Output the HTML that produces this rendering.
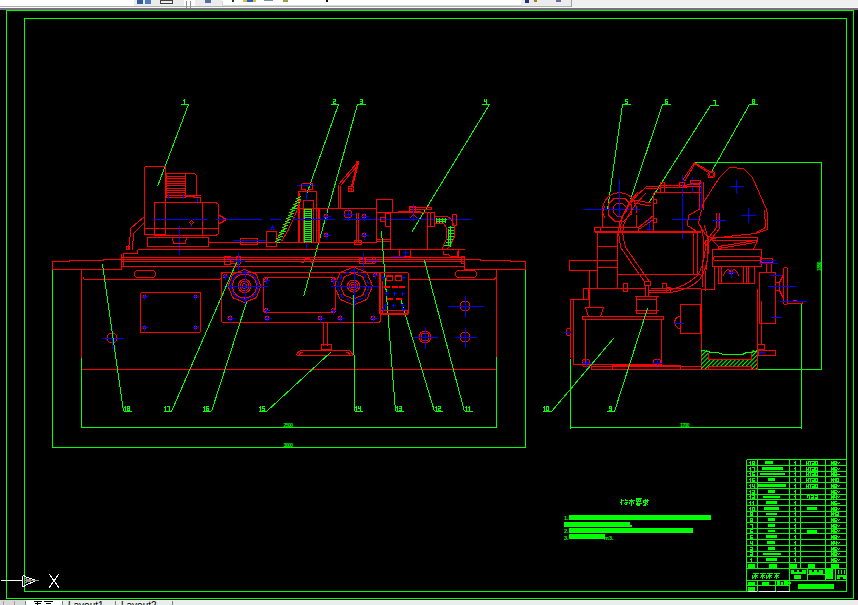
<!DOCTYPE html>
<html><head><meta charset="utf-8"><style>
html,body{margin:0;padding:0;background:#000;width:858px;height:605px;overflow:hidden}
svg{position:absolute;left:0;top:0}
text{font-family:"Liberation Sans",sans-serif}
</style></head><body>
<svg width="858" height="605" viewBox="0 0 858 605" shape-rendering="crispEdges" stroke-width="1">
<rect x="0" y="0" width="858" height="605" fill="#000"/>
<rect x="0" y="0" width="858" height="6" fill="#ffffff" stroke="none"/>
<rect x="134" y="0" width="50" height="6" fill="#ececec" stroke="none"/>
<rect x="195" y="0" width="27" height="6" fill="#ececec" stroke="none"/>
<rect x="521" y="0" width="51" height="6" fill="#ececec" stroke="none"/>
<rect x="572" y="0" width="286" height="7" fill="#f0f0f0" stroke="none"/>
<rect x="0" y="6" width="572" height="1" fill="#b0b0b0" stroke="none"/>
<rect x="571" y="0" width="1" height="7" fill="#a0a0a0" stroke="none"/>
<rect x="0" y="7" width="858" height="1" fill="#f8f8f8" stroke="none"/>
<rect x="0" y="8" width="858" height="2" fill="#766e7c" stroke="none"/>
<rect x="6.5" y="10.5" width="847" height="588" stroke="#00ff00" fill="none"/>
<rect x="24.5" y="18.5" width="822" height="573" stroke="#00ff00" fill="none"/>
<rect x="0" y="600" width="858" height="5" fill="#e6e6e6" stroke="none"/>
<line x1="180.5" y1="104.5" x2="188.5" y2="104.5" stroke="#00ff00"/>
<path d="M184,99h1v1h-1zM183,100h1v1h-1zM184,100h1v1h-1zM184,101h1v1h-1zM184,102h1v1h-1zM184,103h1v1h-1z" fill="#00ff00" stroke="none"/>
<line x1="188.5" y1="104.5" x2="157.5" y2="186.5" stroke="#00ff00"/>
<line x1="330.5" y1="104.5" x2="338.5" y2="104.5" stroke="#00ff00"/>
<path d="M333,99h1v1h-1zM334,99h1v1h-1zM335,99h1v1h-1zM335,100h1v1h-1zM333,101h1v1h-1zM334,101h1v1h-1zM335,101h1v1h-1zM333,102h1v1h-1zM333,103h1v1h-1zM334,103h1v1h-1zM335,103h1v1h-1z" fill="#00ff00" stroke="none"/>
<line x1="338.5" y1="104.5" x2="306.5" y2="194.5" stroke="#00ff00"/>
<line x1="357.5" y1="104.5" x2="365.5" y2="104.5" stroke="#00ff00"/>
<path d="M360,99h1v1h-1zM361,99h1v1h-1zM362,99h1v1h-1zM362,100h1v1h-1zM360,101h1v1h-1zM361,101h1v1h-1zM362,101h1v1h-1zM362,102h1v1h-1zM360,103h1v1h-1zM361,103h1v1h-1zM362,103h1v1h-1z" fill="#00ff00" stroke="none"/>
<line x1="357.5" y1="104.5" x2="303.5" y2="296.5" stroke="#00ff00"/>
<line x1="481.5" y1="104.5" x2="489.5" y2="104.5" stroke="#00ff00"/>
<path d="M484,99h1v1h-1zM486,99h1v1h-1zM484,100h1v1h-1zM486,100h1v1h-1zM484,101h1v1h-1zM485,101h1v1h-1zM486,101h1v1h-1zM486,102h1v1h-1zM486,103h1v1h-1z" fill="#00ff00" stroke="none"/>
<line x1="489.5" y1="104.5" x2="411.5" y2="232.5" stroke="#00ff00"/>
<rect x="144.5" y="166.5" width="21" height="68" stroke="#ff0000" fill="none" rx="1.5"/>
<rect x="166.5" y="173.5" width="19" height="24" stroke="#ff0000" fill="none"/>
<path d="M185.5,173.5 H193 Q196.5,173.5 196.5,177 V193 Q196.5,196.5 193,196.5 H185.5" stroke="#ff0000" fill="none"/>
<line x1="166.5" y1="176.5" x2="185.5" y2="176.5" stroke="#ff0000"/>
<line x1="166.5" y1="178.5" x2="185.5" y2="178.5" stroke="#ff0000"/>
<line x1="166.5" y1="181.5" x2="185.5" y2="181.5" stroke="#ff0000"/>
<line x1="166.5" y1="183.5" x2="185.5" y2="183.5" stroke="#ff0000"/>
<line x1="166.5" y1="185.5" x2="185.5" y2="185.5" stroke="#ff0000"/>
<line x1="166.5" y1="188.5" x2="185.5" y2="188.5" stroke="#ff0000"/>
<line x1="166.5" y1="190.5" x2="185.5" y2="190.5" stroke="#ff0000"/>
<line x1="166.5" y1="192.5" x2="185.5" y2="192.5" stroke="#ff0000"/>
<line x1="166.5" y1="195.5" x2="200.5" y2="195.5" stroke="#ff0000"/>
<polyline points="192.5,197.5 200.5,197.5 200.5,202.5" stroke="#ff0000" fill="none"/>
<line x1="168.5" y1="193.5" x2="168.5" y2="198.5" stroke="#0000ff"/>
<line x1="183.5" y1="193.5" x2="183.5" y2="198.5" stroke="#0000ff"/>
<line x1="197.5" y1="197.5" x2="197.5" y2="204.5" stroke="#0000ff"/>
<path d="M154.5,202.5 H214 Q218.5,202.5 218.5,206 V232 Q218.5,235.5 214,235.5 H154.5 Z" stroke="#ff0000" fill="none"/>
<line x1="165.5" y1="202.5" x2="165.5" y2="235.5" stroke="#ff0000"/>
<line x1="202.5" y1="202.5" x2="202.5" y2="235.5" stroke="#ff0000"/>
<line x1="144.5" y1="228.5" x2="218.5" y2="228.5" stroke="#ff0000"/>
<line x1="152.5" y1="219.5" x2="189.5" y2="219.5" stroke="#0000ff"/>
<line x1="191.5" y1="219.5" x2="207.5" y2="219.5" stroke="#0000ff"/>
<line x1="215.5" y1="219.5" x2="225.5" y2="219.5" stroke="#0000ff"/>
<polyline points="218.5,215.5 222.5,216.5 222.5,217.5 226.5,219.5 222.5,221.5 222.5,222.5 218.5,223.5" stroke="#ff0000" fill="none"/>
<circle cx="191.5" cy="222.5" r="1.8" stroke="#ff0000" fill="none"/>
<line x1="191.5" y1="224.5" x2="191.5" y2="226.5" stroke="#0000ff"/>
<line x1="179.5" y1="225.5" x2="179.5" y2="254.5" stroke="#0000ff"/>
<rect x="147.5" y="237.5" width="61" height="9" stroke="#ff0000" fill="none"/>
<polyline points="172.5,237.5 173.5,243.5 185.5,243.5 186.5,237.5" stroke="#ff0000" fill="none"/>
<path d="M144.5,216.5 L131,228 L128.5,250" stroke="#ff0000" fill="none"/>
<path d="M144.5,222.5 L134,233 L132,250" stroke="#ff0000" fill="none"/>
<circle cx="128" cy="248" r="2" stroke="#ff0000" fill="none"/>
<rect x="240.5" y="238.5" width="17" height="6" stroke="#ff0000" fill="none"/>
<line x1="232.5" y1="240.5" x2="266.5" y2="240.5" stroke="#0000ff"/>
<rect x="266.5" y="231.5" width="10" height="15" stroke="#ff0000" fill="none"/>
<polyline points="270.5,230.5 272.5,226.5 274.5,230.5" stroke="#0000ff" fill="none"/>
<line x1="208.5" y1="242.5" x2="376.5" y2="242.5" stroke="#ff0000"/>
<line x1="137.5" y1="249.5" x2="464.5" y2="249.5" stroke="#ff0000"/>
<polyline points="137.5,249.5 137.5,253.5 123.5,253.5 123.5,266.5" stroke="#ff0000" fill="none"/>
<line x1="121.5" y1="257.5" x2="464.5" y2="257.5" stroke="#ff0000"/>
<line x1="121.5" y1="259.5" x2="464.5" y2="259.5" stroke="#ff0000"/>
<line x1="121.5" y1="261.5" x2="464.5" y2="261.5" stroke="#ff0000"/>
<line x1="120.5" y1="266.5" x2="464.5" y2="266.5" stroke="#ff0000"/>
<line x1="121.5" y1="253.5" x2="121.5" y2="266.5" stroke="#ff0000"/>
<polyline points="52.5,269.5 52.5,261.5 69.5,261.5 69.5,260.5 103.5,260.5 103.5,259.5 121.5,259.5" stroke="#ff0000" fill="none"/>
<line x1="52.5" y1="269.5" x2="121.5" y2="269.5" stroke="#ff0000"/>
<line x1="121.5" y1="257.5" x2="121.5" y2="269.5" stroke="#ff0000"/>
<polyline points="464.5,257.5 464.5,269.5 525.5,269.5 525.5,261.5 510.5,261.5 510.5,260.5 480.5,260.5 480.5,259.5 464.5,259.5" stroke="#ff0000" fill="none"/>
<rect x="461.5" y="256.5" width="3" height="7" stroke="#ff0000" fill="none"/>
<line x1="458.5" y1="249.5" x2="458.5" y2="257.5" stroke="#ff0000"/>
<line x1="81.5" y1="269.5" x2="81.5" y2="357.5" stroke="#ff0000"/>
<path d="M83.5,277 Q83.5,279.5 86,279.5 H218 Q221.5,279.5 221.5,276 V272" stroke="#ff0000" fill="none"/>
<path d="M408.5,279.5 H492 Q496.5,279.5 496.5,275 V269" stroke="#ff0000" fill="none"/>
<line x1="496.5" y1="269.5" x2="496.5" y2="356.5" stroke="#ff0000"/>
<line x1="81.5" y1="369.5" x2="496.5" y2="369.5" stroke="#ff0000"/>
<rect x="134.5" y="270.5" width="21" height="7" stroke="#ff0000" fill="none" rx="3.5"/>
<rect x="455.5" y="270.5" width="21" height="7" stroke="#ff0000" fill="none" rx="3.5"/>
<rect x="140.5" y="292.5" width="60" height="40" stroke="#ff0000" fill="none" rx="1.5"/>
<circle cx="144.5" cy="296.5" r="1.5" stroke="#ff0000" fill="none"/>
<line x1="141.5" y1="296.5" x2="147.5" y2="296.5" stroke="#0000ff"/>
<line x1="144.5" y1="293.5" x2="144.5" y2="299.5" stroke="#0000ff"/>
<circle cx="195.5" cy="296.5" r="1.5" stroke="#ff0000" fill="none"/>
<line x1="192.5" y1="296.5" x2="198.5" y2="296.5" stroke="#0000ff"/>
<line x1="195.5" y1="293.5" x2="195.5" y2="299.5" stroke="#0000ff"/>
<circle cx="144.5" cy="327.5" r="1.5" stroke="#ff0000" fill="none"/>
<line x1="141.5" y1="327.5" x2="147.5" y2="327.5" stroke="#0000ff"/>
<line x1="144.5" y1="324.5" x2="144.5" y2="330.5" stroke="#0000ff"/>
<circle cx="195.5" cy="327.5" r="1.5" stroke="#ff0000" fill="none"/>
<line x1="192.5" y1="327.5" x2="198.5" y2="327.5" stroke="#0000ff"/>
<line x1="195.5" y1="324.5" x2="195.5" y2="330.5" stroke="#0000ff"/>
<circle cx="112" cy="338" r="5" stroke="#ff0000" fill="none"/>
<line x1="101.5" y1="338.5" x2="123.5" y2="338.5" stroke="#0000ff"/>
<line x1="112.5" y1="328.5" x2="112.5" y2="348.5" stroke="#0000ff"/>
<circle cx="465" cy="306" r="5" stroke="#ff0000" fill="none"/>
<line x1="447.5" y1="306.5" x2="483.5" y2="306.5" stroke="#0000ff"/>
<line x1="465.5" y1="295.5" x2="465.5" y2="317.5" stroke="#0000ff"/>
<circle cx="465" cy="337" r="5" stroke="#ff0000" fill="none"/>
<line x1="454.5" y1="337.5" x2="476.5" y2="337.5" stroke="#0000ff"/>
<line x1="465.5" y1="327.5" x2="465.5" y2="347.5" stroke="#0000ff"/>
<circle cx="425" cy="337" r="6" stroke="#ff0000" fill="none"/>
<circle cx="425" cy="337" r="4" stroke="#ff0000" fill="none"/>
<line x1="413.5" y1="337.5" x2="437.5" y2="337.5" stroke="#0000ff"/>
<line x1="425.5" y1="326.5" x2="425.5" y2="348.5" stroke="#0000ff"/>
<rect x="221.5" y="272.5" width="159" height="50" stroke="#ff0000" fill="none" rx="2.5"/>
<rect x="263.5" y="277.5" width="72" height="35" stroke="#ff0000" fill="none" rx="2"/>
<polygon points="261.0,286.0 256.2,297.7 244.5,302.5 232.8,297.7 228.0,286.0 232.8,274.3 244.5,269.5 256.2,274.3" stroke="#ff0000" fill="none" />
<polygon points="258.5,286.0 254.4,295.9 244.5,300.0 234.6,295.9 230.5,286.0 234.6,276.1 244.5,272.0 254.4,276.1" stroke="#0000ff" fill="none" />
<circle cx="244.5" cy="286" r="12" stroke="#ff0000" fill="none"/>
<circle cx="244.5" cy="286" r="6.5" stroke="#ff0000" fill="none"/>
<circle cx="244.5" cy="286" r="4.5" stroke="#ff0000" fill="none"/>
<circle cx="244.5" cy="286" r="2.5" stroke="#ff0000" fill="none"/>
<line x1="223.5" y1="286.5" x2="267.5" y2="286.5" stroke="#0000ff"/>
<line x1="245.5" y1="269.5" x2="245.5" y2="303.5" stroke="#0000ff"/>
<polygon points="372.5,286.0 366.9,299.4 353.5,305.0 340.1,299.4 334.5,286.0 340.1,272.6 353.5,267.0 366.9,272.6" stroke="#ff0000" fill="none" />
<polygon points="369.5,286.0 364.8,297.3 353.5,302.0 342.2,297.3 337.5,286.0 342.2,274.7 353.5,270.0 364.8,274.7" stroke="#0000ff" fill="none" stroke-dasharray="5 2"/>
<polygon points="366.5,286.0 362.7,295.2 353.5,299.0 344.3,295.2 340.5,286.0 344.3,276.8 353.5,273.0 362.7,276.8" stroke="#ff0000" fill="none" />
<circle cx="353.5" cy="286" r="6" stroke="#ff0000" fill="none"/>
<circle cx="353.5" cy="286" r="4" stroke="#ff0000" fill="none"/>
<circle cx="353.5" cy="286" r="2" stroke="#ff0000" fill="none"/>
<line x1="330.5" y1="286.5" x2="378.5" y2="286.5" stroke="#0000ff"/>
<line x1="354.5" y1="266.5" x2="354.5" y2="306.5" stroke="#0000ff"/>
<circle cx="230" cy="318" r="1.8" stroke="#ff0000" fill="none"/>
<line x1="226.5" y1="318.5" x2="234.5" y2="318.5" stroke="#0000ff"/>
<line x1="230.5" y1="314.5" x2="230.5" y2="322.5" stroke="#0000ff"/>
<circle cx="267" cy="318" r="1.8" stroke="#ff0000" fill="none"/>
<line x1="263.5" y1="318.5" x2="271.5" y2="318.5" stroke="#0000ff"/>
<line x1="267.5" y1="314.5" x2="267.5" y2="322.5" stroke="#0000ff"/>
<circle cx="320" cy="318" r="1.8" stroke="#ff0000" fill="none"/>
<line x1="316.5" y1="318.5" x2="324.5" y2="318.5" stroke="#0000ff"/>
<line x1="320.5" y1="314.5" x2="320.5" y2="322.5" stroke="#0000ff"/>
<circle cx="340" cy="318" r="1.8" stroke="#ff0000" fill="none"/>
<line x1="336.5" y1="318.5" x2="344.5" y2="318.5" stroke="#0000ff"/>
<line x1="340.5" y1="314.5" x2="340.5" y2="322.5" stroke="#0000ff"/>
<circle cx="373" cy="318" r="1.8" stroke="#ff0000" fill="none"/>
<line x1="369.5" y1="318.5" x2="377.5" y2="318.5" stroke="#0000ff"/>
<line x1="373.5" y1="314.5" x2="373.5" y2="322.5" stroke="#0000ff"/>
<circle cx="266" cy="280" r="1.5" stroke="#ff0000" fill="none"/>
<line x1="263.5" y1="280.5" x2="269.5" y2="280.5" stroke="#0000ff"/>
<line x1="266.5" y1="277.5" x2="266.5" y2="283.5" stroke="#0000ff"/>
<circle cx="333" cy="280" r="1.5" stroke="#ff0000" fill="none"/>
<line x1="330.5" y1="280.5" x2="336.5" y2="280.5" stroke="#0000ff"/>
<line x1="333.5" y1="277.5" x2="333.5" y2="283.5" stroke="#0000ff"/>
<circle cx="266" cy="310" r="1.5" stroke="#ff0000" fill="none"/>
<line x1="263.5" y1="310.5" x2="269.5" y2="310.5" stroke="#0000ff"/>
<line x1="266.5" y1="307.5" x2="266.5" y2="313.5" stroke="#0000ff"/>
<circle cx="333" cy="310" r="1.5" stroke="#ff0000" fill="none"/>
<line x1="330.5" y1="310.5" x2="336.5" y2="310.5" stroke="#0000ff"/>
<line x1="333.5" y1="307.5" x2="333.5" y2="313.5" stroke="#0000ff"/>
<circle cx="225" cy="276" r="1.5" stroke="#ff0000" fill="none"/>
<line x1="222.5" y1="276.5" x2="228.5" y2="276.5" stroke="#0000ff"/>
<line x1="225.5" y1="273.5" x2="225.5" y2="279.5" stroke="#0000ff"/>
<circle cx="375" cy="275" r="1.5" stroke="#ff0000" fill="none"/>
<line x1="372.5" y1="275.5" x2="378.5" y2="275.5" stroke="#0000ff"/>
<line x1="375.5" y1="272.5" x2="375.5" y2="278.5" stroke="#0000ff"/>
<line x1="323.5" y1="322.5" x2="323.5" y2="345.5" stroke="#ff0000"/>
<line x1="327.5" y1="322.5" x2="327.5" y2="345.5" stroke="#ff0000"/>
<rect x="321.5" y="344.5" width="10" height="5" stroke="#ff0000" fill="none"/>
<path d="M296.5,355.5 H352.5 Q352,351 348.5,350.5 H302 Q297.5,351 296.5,355.5" stroke="#ff0000" fill="none"/>
<path d="M299.5,355 Q300,352 303,352" stroke="#ff0000" fill="none"/>
<path d="M349.5,355 Q349,352 346,352" stroke="#ff0000" fill="none"/>
<polyline points="300.5,262.5 303.5,262.5 305.5,258.5 309.5,258.5 311.5,262.5 313.5,262.5" stroke="#ff0000" fill="none"/>
<rect x="224.5" y="256.5" width="6" height="8" stroke="#ff0000" fill="none"/>
<rect x="230.5" y="257.5" width="6" height="6" stroke="#ff0000" fill="none"/>
<path d="M236,256 H240 Q242,260 240,264 H236" stroke="#ff0000" fill="none"/>
<line x1="238.5" y1="252.5" x2="238.5" y2="269.5" stroke="#0000ff"/>
<line x1="226.5" y1="258.5" x2="233.5" y2="258.5" stroke="#0000ff"/>
<line x1="233.5" y1="261.5" x2="244.5" y2="261.5" stroke="#0000ff"/>
<rect x="359.5" y="258.5" width="6" height="5" stroke="#ff0000" fill="none"/>
<rect x="365.5" y="257.5" width="7" height="6" stroke="#ff0000" fill="none"/>
<path d="M372,257 H375 Q377,260 375,263 H372" stroke="#ff0000" fill="none"/>
<line x1="363.5" y1="252.5" x2="363.5" y2="269.5" stroke="#0000ff"/>
<line x1="366.5" y1="260.5" x2="378.5" y2="260.5" stroke="#0000ff"/>
<rect x="298.5" y="208.5" width="78" height="34" stroke="#ff0000" fill="none"/>
<rect x="298.5" y="191.5" width="18" height="51" stroke="#ff0000" fill="none"/>
<rect x="303.5" y="200.5" width="10" height="42" stroke="#ff0000" fill="none"/>
<line x1="296.5" y1="185.5" x2="315.5" y2="185.5" stroke="#0000ff"/>
<polyline points="301.5,183.5 312.5,183.5 312.5,189.5 309.5,189.5 309.5,191.5" stroke="#ff0000" fill="none"/>
<polyline points="301.5,183.5 301.5,189.5 305.5,189.5 305.5,191.5" stroke="#ff0000" fill="none"/>
<line x1="306.5" y1="191.5" x2="306.5" y2="200.5" stroke="#0000ff"/>
<line x1="306.5" y1="242.5" x2="306.5" y2="248.5" stroke="#0000ff"/>
<line x1="299.5" y1="192.5" x2="299.5" y2="242.5" stroke="#ff0000"/>
<line x1="304.5" y1="209.5" x2="311.5" y2="209.5" stroke="#00ff00"/>
<line x1="304.5" y1="211.5" x2="311.5" y2="211.5" stroke="#00ff00"/>
<line x1="304.5" y1="213.5" x2="311.5" y2="213.5" stroke="#00ff00"/>
<line x1="304.5" y1="215.5" x2="311.5" y2="215.5" stroke="#00ff00"/>
<line x1="304.5" y1="217.5" x2="311.5" y2="217.5" stroke="#00ff00"/>
<line x1="304.5" y1="219.5" x2="311.5" y2="219.5" stroke="#00ff00"/>
<line x1="304.5" y1="221.5" x2="311.5" y2="221.5" stroke="#00ff00"/>
<line x1="304.5" y1="223.5" x2="311.5" y2="223.5" stroke="#00ff00"/>
<line x1="304.5" y1="225.5" x2="311.5" y2="225.5" stroke="#00ff00"/>
<line x1="304.5" y1="227.5" x2="311.5" y2="227.5" stroke="#00ff00"/>
<line x1="304.5" y1="229.5" x2="311.5" y2="229.5" stroke="#00ff00"/>
<line x1="304.5" y1="231.5" x2="311.5" y2="231.5" stroke="#00ff00"/>
<line x1="304.5" y1="233.5" x2="311.5" y2="233.5" stroke="#00ff00"/>
<line x1="304.5" y1="235.5" x2="311.5" y2="235.5" stroke="#00ff00"/>
<line x1="304.5" y1="237.5" x2="311.5" y2="237.5" stroke="#00ff00"/>
<line x1="304.5" y1="239.5" x2="311.5" y2="239.5" stroke="#00ff00"/>
<line x1="304.5" y1="241.5" x2="311.5" y2="241.5" stroke="#00ff00"/>
<line x1="304.5" y1="208.5" x2="304.5" y2="242.5" stroke="#00ff00"/>
<line x1="311.5" y1="208.5" x2="311.5" y2="242.5" stroke="#00ff00"/>
<rect x="316.5" y="230.5" width="3" height="12" stroke="#ff0000" fill="none"/>
<line x1="316.5" y1="208.5" x2="316.5" y2="242.5" stroke="#ff0000"/>
<line x1="318.5" y1="208.5" x2="318.5" y2="242.5" stroke="#ff0000"/>
<line x1="319.5" y1="208.5" x2="319.5" y2="242.5" stroke="#ff0000"/>
<line x1="338.5" y1="184.5" x2="338.5" y2="208.5" stroke="#ff0000"/>
<line x1="340.5" y1="185.5" x2="340.5" y2="208.5" stroke="#ff0000"/>
<line x1="338.5" y1="184.5" x2="356.5" y2="163.5" stroke="#ff0000"/>
<line x1="340.5" y1="185.5" x2="357.5" y2="165.5" stroke="#ff0000"/>
<rect x="356" y="161" width="3" height="3" fill="#ff0000" stroke="none"/>
<line x1="357.5" y1="162.5" x2="351.5" y2="186.5" stroke="#ff0000"/>
<line x1="358.5" y1="163.5" x2="352.5" y2="186.5" stroke="#ff0000"/>
<circle cx="351" cy="189" r="3" stroke="#ff0000" fill="none"/>
<circle cx="350" cy="190" r="1.5" stroke="#ff0000" fill="none"/>
<circle cx="326" cy="216" r="2" stroke="#ff0000" fill="none"/>
<line x1="322.5" y1="216.5" x2="330.5" y2="216.5" stroke="#0000ff"/>
<line x1="326.5" y1="212.5" x2="326.5" y2="220.5" stroke="#0000ff"/>
<circle cx="326" cy="235" r="2" stroke="#ff0000" fill="none"/>
<line x1="322.5" y1="235.5" x2="330.5" y2="235.5" stroke="#0000ff"/>
<line x1="326.5" y1="231.5" x2="326.5" y2="239.5" stroke="#0000ff"/>
<circle cx="364" cy="216" r="2" stroke="#ff0000" fill="none"/>
<line x1="360.5" y1="216.5" x2="368.5" y2="216.5" stroke="#0000ff"/>
<line x1="364.5" y1="212.5" x2="364.5" y2="220.5" stroke="#0000ff"/>
<circle cx="364" cy="235" r="2" stroke="#ff0000" fill="none"/>
<line x1="360.5" y1="235.5" x2="368.5" y2="235.5" stroke="#0000ff"/>
<line x1="364.5" y1="231.5" x2="364.5" y2="239.5" stroke="#0000ff"/>
<circle cx="348" cy="214" r="4" stroke="#ff0000" fill="none"/>
<line x1="342.5" y1="214.5" x2="354.5" y2="214.5" stroke="#0000ff"/>
<line x1="348.5" y1="208.5" x2="348.5" y2="220.5" stroke="#0000ff"/>
<line x1="356.5" y1="212.5" x2="356.5" y2="242.5" stroke="#ff0000"/>
<line x1="358.5" y1="212.5" x2="358.5" y2="242.5" stroke="#ff0000"/>
<rect x="354.5" y="240.5" width="7" height="4" stroke="#ff0000" fill="none"/>
<polyline points="298.5,197.5 290.5,214.5 283.5,228.5 276.5,240.5" stroke="#ff0000" fill="none"/>
<polyline points="300.5,200.5 294.5,216.5 287.5,231.5 281.5,241.5" stroke="#ff0000" fill="none"/>
<line x1="296.5" y1="198.5" x2="301.5" y2="196.5" stroke="#00ff00"/>
<line x1="297.5" y1="199.5" x2="300.5" y2="199.5" stroke="#00ff00"/>
<line x1="295.5" y1="201.5" x2="300.5" y2="199.5" stroke="#00ff00"/>
<line x1="296.5" y1="202.5" x2="299.5" y2="202.5" stroke="#00ff00"/>
<line x1="293.5" y1="204.5" x2="298.5" y2="202.5" stroke="#00ff00"/>
<line x1="294.5" y1="205.5" x2="297.5" y2="205.5" stroke="#00ff00"/>
<line x1="292.5" y1="207.5" x2="297.5" y2="205.5" stroke="#00ff00"/>
<line x1="293.5" y1="208.5" x2="296.5" y2="208.5" stroke="#00ff00"/>
<line x1="290.5" y1="209.5" x2="295.5" y2="207.5" stroke="#00ff00"/>
<line x1="291.5" y1="210.5" x2="294.5" y2="210.5" stroke="#00ff00"/>
<line x1="289.5" y1="212.5" x2="294.5" y2="210.5" stroke="#00ff00"/>
<line x1="290.5" y1="213.5" x2="293.5" y2="213.5" stroke="#00ff00"/>
<line x1="288.5" y1="215.5" x2="293.5" y2="213.5" stroke="#00ff00"/>
<line x1="289.5" y1="216.5" x2="292.5" y2="216.5" stroke="#00ff00"/>
<line x1="286.5" y1="218.5" x2="291.5" y2="216.5" stroke="#00ff00"/>
<line x1="287.5" y1="219.5" x2="290.5" y2="219.5" stroke="#00ff00"/>
<line x1="285.5" y1="221.5" x2="290.5" y2="219.5" stroke="#00ff00"/>
<line x1="286.5" y1="222.5" x2="289.5" y2="222.5" stroke="#00ff00"/>
<line x1="283.5" y1="224.5" x2="288.5" y2="222.5" stroke="#00ff00"/>
<line x1="284.5" y1="225.5" x2="287.5" y2="225.5" stroke="#00ff00"/>
<line x1="282.5" y1="227.5" x2="287.5" y2="225.5" stroke="#00ff00"/>
<line x1="283.5" y1="228.5" x2="286.5" y2="228.5" stroke="#00ff00"/>
<line x1="281.5" y1="230.5" x2="286.5" y2="228.5" stroke="#00ff00"/>
<line x1="282.5" y1="231.5" x2="285.5" y2="231.5" stroke="#00ff00"/>
<line x1="279.5" y1="232.5" x2="284.5" y2="230.5" stroke="#00ff00"/>
<line x1="280.5" y1="233.5" x2="283.5" y2="233.5" stroke="#00ff00"/>
<line x1="278.5" y1="235.5" x2="283.5" y2="233.5" stroke="#00ff00"/>
<line x1="279.5" y1="236.5" x2="282.5" y2="236.5" stroke="#00ff00"/>
<line x1="276.5" y1="238.5" x2="281.5" y2="236.5" stroke="#00ff00"/>
<line x1="277.5" y1="239.5" x2="280.5" y2="239.5" stroke="#00ff00"/>
<line x1="275.5" y1="241.5" x2="280.5" y2="239.5" stroke="#00ff00"/>
<line x1="276.5" y1="242.5" x2="279.5" y2="242.5" stroke="#00ff00"/>
<line x1="225.5" y1="219.5" x2="261.5" y2="219.5" stroke="#0000ff"/>
<line x1="269.5" y1="219.5" x2="280.5" y2="219.5" stroke="#0000ff"/>
<line x1="292.5" y1="219.5" x2="334.5" y2="219.5" stroke="#0000ff"/>
<line x1="342.5" y1="219.5" x2="470.5" y2="219.5" stroke="#0000ff"/>
<rect x="376.5" y="199.5" width="16" height="13" stroke="#ff0000" fill="none"/>
<line x1="376.5" y1="212.5" x2="376.5" y2="242.5" stroke="#ff0000"/>
<line x1="376.5" y1="241.5" x2="390.5" y2="241.5" stroke="#ff0000"/>
<line x1="376.5" y1="239.5" x2="390.5" y2="239.5" stroke="#ff0000"/>
<line x1="385.5" y1="212.5" x2="427.5" y2="212.5" stroke="#ff0000"/>
<line x1="390.5" y1="212.5" x2="390.5" y2="249.5" stroke="#ff0000"/>
<line x1="427.5" y1="212.5" x2="427.5" y2="249.5" stroke="#ff0000"/>
<rect x="385.5" y="213.5" width="5" height="13" stroke="#ff0000" fill="none"/>
<rect x="380.5" y="217.5" width="5" height="4" stroke="#ff0000" fill="none"/>
<rect x="427.5" y="212.5" width="7" height="14" stroke="#ff0000" fill="none"/>
<line x1="430.5" y1="212.5" x2="430.5" y2="226.5" stroke="#ff0000"/>
<rect x="409.5" y="207.5" width="22" height="2" stroke="#ff0000" fill="none"/>
<line x1="397.5" y1="211.5" x2="420.5" y2="211.5" stroke="#ff0000"/>
<rect x="409.5" y="206.5" width="6" height="5" stroke="#ff0000" fill="none"/>
<line x1="413.5" y1="203.5" x2="413.5" y2="220.5" stroke="#0000ff"/>
<polyline points="409.5,218.5 413.5,214.5 417.5,218.5" stroke="#ff0000" fill="none"/>
<polyline points="434.5,216.5 447.5,216.5 451.5,219.5 454.5,226.5 454.5,236.5 450.5,244.5 446.5,250.5" stroke="#ff0000" fill="none"/>
<polyline points="434.5,223.5 443.5,223.5 446.5,227.5 446.5,238.5 443.5,245.5 441.5,250.5" stroke="#ff0000" fill="none"/>
<line x1="436.5" y1="217.5" x2="436.5" y2="222.5" stroke="#00ff00"/>
<line x1="439.5" y1="217.5" x2="439.5" y2="222.5" stroke="#00ff00"/>
<line x1="442.5" y1="217.5" x2="442.5" y2="222.5" stroke="#00ff00"/>
<line x1="445.5" y1="217.5" x2="445.5" y2="222.5" stroke="#00ff00"/>
<line x1="436.5" y1="219.5" x2="446.5" y2="219.5" stroke="#00ff00"/>
<line x1="436.5" y1="221.5" x2="444.5" y2="221.5" stroke="#00ff00"/>
<line x1="447.5" y1="227.5" x2="453.5" y2="227.5" stroke="#00ff00"/>
<line x1="447.5" y1="230.5" x2="453.5" y2="230.5" stroke="#00ff00"/>
<line x1="447.5" y1="233.5" x2="453.5" y2="233.5" stroke="#00ff00"/>
<line x1="447.5" y1="236.5" x2="453.5" y2="236.5" stroke="#00ff00"/>
<line x1="446.5" y1="239.5" x2="452.5" y2="239.5" stroke="#00ff00"/>
<line x1="445.5" y1="242.5" x2="451.5" y2="242.5" stroke="#00ff00"/>
<line x1="443.5" y1="245.5" x2="449.5" y2="245.5" stroke="#00ff00"/>
<line x1="450.5" y1="225.5" x2="450.5" y2="246.5" stroke="#00ff00"/>
<line x1="448.5" y1="228.5" x2="448.5" y2="244.5" stroke="#00ff00"/>
<rect x="452.5" y="214.5" width="4" height="11" stroke="#ff0000" fill="none"/>
<line x1="408.5" y1="249.5" x2="458.5" y2="249.5" stroke="#ff0000"/>
<rect x="399.5" y="249.5" width="11" height="7" stroke="#ff0000" fill="none"/>
<line x1="402.5" y1="252.5" x2="408.5" y2="252.5" stroke="#0000ff"/>
<line x1="405.5" y1="249.5" x2="405.5" y2="255.5" stroke="#0000ff"/>
<polyline points="443.5,250.5 443.5,254.5 448.5,254.5 450.5,256.5 457.5,256.5 457.5,250.5" stroke="#ff0000" fill="none"/>
<line x1="390.5" y1="256.5" x2="403.5" y2="256.5" stroke="#0000ff"/>
<line x1="123.5" y1="411.5" x2="131.5" y2="411.5" stroke="#00ff00"/>
<path d="M125,406h1v1h-1zM124,407h1v1h-1zM125,407h1v1h-1zM125,408h1v1h-1zM125,409h1v1h-1zM125,410h1v1h-1zM127,406h1v1h-1zM128,406h1v1h-1zM129,406h1v1h-1zM127,407h1v1h-1zM129,407h1v1h-1zM127,408h1v1h-1zM128,408h1v1h-1zM129,408h1v1h-1zM127,409h1v1h-1zM129,409h1v1h-1zM127,410h1v1h-1zM128,410h1v1h-1zM129,410h1v1h-1z" fill="#00ff00" stroke="none"/>
<line x1="163.5" y1="411.5" x2="171.5" y2="411.5" stroke="#00ff00"/>
<path d="M165,406h1v1h-1zM164,407h1v1h-1zM165,407h1v1h-1zM165,408h1v1h-1zM165,409h1v1h-1zM165,410h1v1h-1zM167,406h1v1h-1zM168,406h1v1h-1zM169,406h1v1h-1zM169,407h1v1h-1zM169,408h1v1h-1zM169,409h1v1h-1zM169,410h1v1h-1z" fill="#00ff00" stroke="none"/>
<line x1="202.5" y1="411.5" x2="210.5" y2="411.5" stroke="#00ff00"/>
<path d="M204,406h1v1h-1zM203,407h1v1h-1zM204,407h1v1h-1zM204,408h1v1h-1zM204,409h1v1h-1zM204,410h1v1h-1zM206,406h1v1h-1zM207,406h1v1h-1zM208,406h1v1h-1zM206,407h1v1h-1zM206,408h1v1h-1zM207,408h1v1h-1zM208,408h1v1h-1zM206,409h1v1h-1zM208,409h1v1h-1zM206,410h1v1h-1zM207,410h1v1h-1zM208,410h1v1h-1z" fill="#00ff00" stroke="none"/>
<line x1="258.5" y1="411.5" x2="266.5" y2="411.5" stroke="#00ff00"/>
<path d="M260,406h1v1h-1zM259,407h1v1h-1zM260,407h1v1h-1zM260,408h1v1h-1zM260,409h1v1h-1zM260,410h1v1h-1zM262,406h1v1h-1zM263,406h1v1h-1zM264,406h1v1h-1zM262,407h1v1h-1zM262,408h1v1h-1zM263,408h1v1h-1zM264,408h1v1h-1zM264,409h1v1h-1zM262,410h1v1h-1zM263,410h1v1h-1zM264,410h1v1h-1z" fill="#00ff00" stroke="none"/>
<line x1="354.5" y1="411.5" x2="362.5" y2="411.5" stroke="#00ff00"/>
<path d="M356,406h1v1h-1zM355,407h1v1h-1zM356,407h1v1h-1zM356,408h1v1h-1zM356,409h1v1h-1zM356,410h1v1h-1zM358,406h1v1h-1zM360,406h1v1h-1zM358,407h1v1h-1zM360,407h1v1h-1zM358,408h1v1h-1zM359,408h1v1h-1zM360,408h1v1h-1zM360,409h1v1h-1zM360,410h1v1h-1z" fill="#00ff00" stroke="none"/>
<line x1="395.5" y1="411.5" x2="403.5" y2="411.5" stroke="#00ff00"/>
<path d="M397,406h1v1h-1zM396,407h1v1h-1zM397,407h1v1h-1zM397,408h1v1h-1zM397,409h1v1h-1zM397,410h1v1h-1zM399,406h1v1h-1zM400,406h1v1h-1zM401,406h1v1h-1zM401,407h1v1h-1zM399,408h1v1h-1zM400,408h1v1h-1zM401,408h1v1h-1zM401,409h1v1h-1zM399,410h1v1h-1zM400,410h1v1h-1zM401,410h1v1h-1z" fill="#00ff00" stroke="none"/>
<line x1="434.5" y1="411.5" x2="442.5" y2="411.5" stroke="#00ff00"/>
<path d="M436,406h1v1h-1zM435,407h1v1h-1zM436,407h1v1h-1zM436,408h1v1h-1zM436,409h1v1h-1zM436,410h1v1h-1zM438,406h1v1h-1zM439,406h1v1h-1zM440,406h1v1h-1zM440,407h1v1h-1zM438,408h1v1h-1zM439,408h1v1h-1zM440,408h1v1h-1zM438,409h1v1h-1zM438,410h1v1h-1zM439,410h1v1h-1zM440,410h1v1h-1z" fill="#00ff00" stroke="none"/>
<line x1="464.5" y1="411.5" x2="472.5" y2="411.5" stroke="#00ff00"/>
<path d="M466,406h1v1h-1zM465,407h1v1h-1zM466,407h1v1h-1zM466,408h1v1h-1zM466,409h1v1h-1zM466,410h1v1h-1zM469,406h1v1h-1zM468,407h1v1h-1zM469,407h1v1h-1zM469,408h1v1h-1zM469,409h1v1h-1zM469,410h1v1h-1z" fill="#00ff00" stroke="none"/>
<line x1="102.5" y1="264.5" x2="123.5" y2="411.5" stroke="#00ff00"/>
<line x1="236.5" y1="262.5" x2="171.5" y2="411.5" stroke="#00ff00"/>
<line x1="246.5" y1="302.5" x2="211.5" y2="411.5" stroke="#00ff00"/>
<line x1="331.5" y1="351.5" x2="266.5" y2="411.5" stroke="#00ff00"/>
<line x1="353.5" y1="295.5" x2="354.5" y2="411.5" stroke="#00ff00"/>
<line x1="381.5" y1="231.5" x2="395.5" y2="411.5" stroke="#00ff00"/>
<line x1="400.5" y1="298.5" x2="434.5" y2="411.5" stroke="#00ff00"/>
<line x1="424.5" y1="260.5" x2="464.5" y2="411.5" stroke="#00ff00"/>
<rect x="379.5" y="272.5" width="29" height="42" stroke="#ff0000" fill="none" rx="2"/>
<line x1="382.5" y1="280.5" x2="382.5" y2="312.5" stroke="#ff0000"/>
<rect x="380.5" y="310.5" width="27" height="3" stroke="#ff0000" fill="none"/>
<rect x="386" y="275" width="7" height="2" fill="#ff0000" stroke="none"/>
<rect x="386.5" y="275.5" width="6" height="5" stroke="#ff0000" fill="none"/>
<rect x="395" y="275" width="7" height="2" fill="#ff0000" stroke="none"/>
<rect x="395.5" y="275.5" width="6" height="5" stroke="#ff0000" fill="none"/>
<rect x="384" y="286" width="6" height="2" fill="#ff0000" stroke="none"/>
<rect x="392" y="286" width="6" height="2" fill="#ff0000" stroke="none"/>
<rect x="399" y="286" width="6" height="2" fill="#ff0000" stroke="none"/>
<rect x="387" y="298" width="6" height="2" fill="#ff0000" stroke="none"/>
<rect x="396" y="298" width="6" height="2" fill="#ff0000" stroke="none"/>
<line x1="385.5" y1="293.5" x2="387.5" y2="293.5" stroke="#ff0000"/>
<line x1="386.5" y1="292.5" x2="386.5" y2="294.5" stroke="#ff0000"/>
<line x1="384.5" y1="293.5" x2="388.5" y2="293.5" stroke="#0000ff"/>
<line x1="386.5" y1="291.5" x2="386.5" y2="295.5" stroke="#0000ff"/>
<line x1="393.5" y1="293.5" x2="395.5" y2="293.5" stroke="#ff0000"/>
<line x1="394.5" y1="292.5" x2="394.5" y2="294.5" stroke="#ff0000"/>
<line x1="392.5" y1="293.5" x2="396.5" y2="293.5" stroke="#0000ff"/>
<line x1="394.5" y1="291.5" x2="394.5" y2="295.5" stroke="#0000ff"/>
<line x1="401.5" y1="293.5" x2="403.5" y2="293.5" stroke="#ff0000"/>
<line x1="402.5" y1="292.5" x2="402.5" y2="294.5" stroke="#ff0000"/>
<line x1="400.5" y1="293.5" x2="404.5" y2="293.5" stroke="#0000ff"/>
<line x1="402.5" y1="291.5" x2="402.5" y2="295.5" stroke="#0000ff"/>
<line x1="384.5" y1="305.5" x2="386.5" y2="305.5" stroke="#ff0000"/>
<line x1="385.5" y1="304.5" x2="385.5" y2="306.5" stroke="#ff0000"/>
<line x1="383.5" y1="305.5" x2="387.5" y2="305.5" stroke="#0000ff"/>
<line x1="385.5" y1="303.5" x2="385.5" y2="307.5" stroke="#0000ff"/>
<line x1="392.5" y1="305.5" x2="394.5" y2="305.5" stroke="#ff0000"/>
<line x1="393.5" y1="304.5" x2="393.5" y2="306.5" stroke="#ff0000"/>
<line x1="391.5" y1="305.5" x2="395.5" y2="305.5" stroke="#0000ff"/>
<line x1="393.5" y1="303.5" x2="393.5" y2="307.5" stroke="#0000ff"/>
<line x1="401.5" y1="305.5" x2="403.5" y2="305.5" stroke="#ff0000"/>
<line x1="402.5" y1="304.5" x2="402.5" y2="306.5" stroke="#ff0000"/>
<line x1="400.5" y1="305.5" x2="404.5" y2="305.5" stroke="#0000ff"/>
<line x1="402.5" y1="303.5" x2="402.5" y2="307.5" stroke="#0000ff"/>
<line x1="382.5" y1="309.5" x2="384.5" y2="309.5" stroke="#ff0000"/>
<line x1="383.5" y1="308.5" x2="383.5" y2="310.5" stroke="#ff0000"/>
<line x1="381.5" y1="309.5" x2="385.5" y2="309.5" stroke="#0000ff"/>
<line x1="383.5" y1="307.5" x2="383.5" y2="311.5" stroke="#0000ff"/>
<line x1="402.5" y1="309.5" x2="404.5" y2="309.5" stroke="#ff0000"/>
<line x1="403.5" y1="308.5" x2="403.5" y2="310.5" stroke="#ff0000"/>
<line x1="401.5" y1="309.5" x2="405.5" y2="309.5" stroke="#0000ff"/>
<line x1="403.5" y1="307.5" x2="403.5" y2="311.5" stroke="#0000ff"/>
<line x1="382.5" y1="277.5" x2="384.5" y2="277.5" stroke="#ff0000"/>
<line x1="383.5" y1="276.5" x2="383.5" y2="278.5" stroke="#ff0000"/>
<line x1="381.5" y1="277.5" x2="385.5" y2="277.5" stroke="#0000ff"/>
<line x1="383.5" y1="275.5" x2="383.5" y2="279.5" stroke="#0000ff"/>
<line x1="402.5" y1="277.5" x2="404.5" y2="277.5" stroke="#ff0000"/>
<line x1="403.5" y1="276.5" x2="403.5" y2="278.5" stroke="#ff0000"/>
<line x1="401.5" y1="277.5" x2="405.5" y2="277.5" stroke="#0000ff"/>
<line x1="403.5" y1="275.5" x2="403.5" y2="279.5" stroke="#0000ff"/>
<line x1="52.5" y1="269.5" x2="52.5" y2="447.5" stroke="#00ff00"/>
<line x1="81.5" y1="357.5" x2="81.5" y2="427.5" stroke="#00ff00"/>
<line x1="496.5" y1="356.5" x2="496.5" y2="427.5" stroke="#00ff00"/>
<line x1="525.5" y1="269.5" x2="525.5" y2="447.5" stroke="#00ff00"/>
<line x1="81.5" y1="427.5" x2="496.5" y2="427.5" stroke="#00ff00"/>
<line x1="52.5" y1="447.5" x2="525.5" y2="447.5" stroke="#00ff00"/>
<text x="283.5" y="427" fill="#00ff00" font-size="5" font-weight="bold" letter-spacing="-0.5">2500</text>
<text x="283.5" y="447" fill="#00ff00" font-size="5" font-weight="bold" letter-spacing="-0.5">3000</text>
<line x1="622.5" y1="104.5" x2="630.5" y2="104.5" stroke="#00ff00"/>
<path d="M625,99h1v1h-1zM626,99h1v1h-1zM627,99h1v1h-1zM625,100h1v1h-1zM625,101h1v1h-1zM626,101h1v1h-1zM627,101h1v1h-1zM627,102h1v1h-1zM625,103h1v1h-1zM626,103h1v1h-1zM627,103h1v1h-1z" fill="#00ff00" stroke="none"/>
<line x1="622.5" y1="104.5" x2="607.5" y2="209.5" stroke="#00ff00"/>
<line x1="662.5" y1="104.5" x2="670.5" y2="104.5" stroke="#00ff00"/>
<path d="M665,99h1v1h-1zM666,99h1v1h-1zM667,99h1v1h-1zM665,100h1v1h-1zM665,101h1v1h-1zM666,101h1v1h-1zM667,101h1v1h-1zM665,102h1v1h-1zM667,102h1v1h-1zM665,103h1v1h-1zM666,103h1v1h-1zM667,103h1v1h-1z" fill="#00ff00" stroke="none"/>
<line x1="662.5" y1="104.5" x2="630.5" y2="199.5" stroke="#00ff00"/>
<line x1="710.5" y1="105.5" x2="718.5" y2="105.5" stroke="#00ff00"/>
<path d="M713,100h1v1h-1zM714,100h1v1h-1zM715,100h1v1h-1zM715,101h1v1h-1zM715,102h1v1h-1zM715,103h1v1h-1zM715,104h1v1h-1z" fill="#00ff00" stroke="none"/>
<line x1="710.5" y1="105.5" x2="648.5" y2="203.5" stroke="#00ff00"/>
<line x1="749.5" y1="104.5" x2="757.5" y2="104.5" stroke="#00ff00"/>
<path d="M752,99h1v1h-1zM753,99h1v1h-1zM754,99h1v1h-1zM752,100h1v1h-1zM754,100h1v1h-1zM752,101h1v1h-1zM753,101h1v1h-1zM754,101h1v1h-1zM752,102h1v1h-1zM754,102h1v1h-1zM752,103h1v1h-1zM753,103h1v1h-1zM754,103h1v1h-1z" fill="#00ff00" stroke="none"/>
<line x1="749.5" y1="104.5" x2="710.5" y2="173.5" stroke="#00ff00"/>
<line x1="694.5" y1="162.5" x2="821.5" y2="162.5" stroke="#00ff00"/>
<line x1="821.5" y1="162.5" x2="821.5" y2="369.5" stroke="#00ff00"/>
<line x1="757.5" y1="369.5" x2="821.5" y2="369.5" stroke="#00ff00"/>
<text x="821" y="271" fill="#00ff00" font-size="5" font-weight="bold" letter-spacing="-0.5" transform="rotate(-90 821 271)">1850</text>
<polyline points="604.8,218.0 602.8,212.5 602.8,206.5 604.8,201.0 608.6,196.5 613.7,193.5 619.5,192.5 625.3,193.5 630.4,196.5 634.2,201.0 636.2,206.5 636.2,212.5" stroke="#ff0000" fill="none"/>
<polygon points="631.0,214.3 624.3,221.0 614.7,221.0 608.0,214.3 608.0,204.7 614.7,198.0 624.3,198.0 631.0,204.7" stroke="#ff0000" fill="none"/>
<polygon points="626.0,212.2 622.2,216.0 616.8,216.0 613.0,212.2 613.0,206.8 616.8,203.0 622.2,203.0 626.0,206.8" stroke="#ff0000" fill="none"/>
<line x1="582.5" y1="209.5" x2="640.5" y2="209.5" stroke="#0000ff"/>
<line x1="619.5" y1="178.5" x2="619.5" y2="217.5" stroke="#0000ff"/>
<polyline points="602.5,227.5 602.5,212.5 604.5,206.5" stroke="#ff0000" fill="none"/>
<polyline points="636.5,227.5 636.5,214.5" stroke="#ff0000" fill="none"/>
<rect x="594.5" y="227.5" width="44" height="4" stroke="#ff0000" fill="none"/>
<line x1="600.5" y1="227.5" x2="600.5" y2="231.5" stroke="#ff0000"/>
<path d="M642,190 Q626,206 620,222 Q617,232 621,248 L644,281" stroke="#ff0000" fill="none"/>
<path d="M646,193 Q630,209 624,224 Q621,234 626,248 L649,281" stroke="#ff0000" fill="none"/>
<path d="M638,192 Q621,210 620,232" stroke="#ff0000" fill="none"/>
<path d="M634,200 L651,203" stroke="#ff0000" fill="none"/>
<path d="M634,203 L651,206" stroke="#ff0000" fill="none"/>
<line x1="597.5" y1="231.5" x2="597.5" y2="288.5" stroke="#ff0000"/>
<line x1="617.5" y1="231.5" x2="617.5" y2="288.5" stroke="#ff0000"/>
<line x1="597.5" y1="246.5" x2="617.5" y2="246.5" stroke="#ff0000"/>
<line x1="597.5" y1="260.5" x2="617.5" y2="260.5" stroke="#ff0000"/>
<line x1="597.5" y1="267.5" x2="617.5" y2="267.5" stroke="#ff0000"/>
<rect x="569.5" y="260.5" width="28" height="10" stroke="#ff0000" fill="none"/>
<line x1="589.5" y1="270.5" x2="589.5" y2="307.5" stroke="#ff0000"/>
<rect x="583.5" y="288.5" width="5" height="11" stroke="#ff0000" fill="none"/>
<line x1="589.5" y1="288.5" x2="617.5" y2="288.5" stroke="#ff0000"/>
<polyline points="570.5,357.5 570.5,299.5 573.5,299.5 573.5,364.5 591.5,364.5" stroke="#ff0000" fill="none"/>
<line x1="573.5" y1="299.5" x2="589.5" y2="299.5" stroke="#ff0000"/>
<path d="M570,328 Q566,328 566,332 Q566,336 570,336" stroke="#ff0000" fill="none"/>
<line x1="563.5" y1="332.5" x2="570.5" y2="332.5" stroke="#0000ff"/>
<line x1="653.5" y1="192.5" x2="700.5" y2="192.5" stroke="#ff0000"/>
<line x1="653.5" y1="192.5" x2="653.5" y2="231.5" stroke="#ff0000"/>
<line x1="653.5" y1="231.5" x2="700.5" y2="231.5" stroke="#ff0000"/>
<line x1="646.5" y1="186.5" x2="700.5" y2="184.5" stroke="#ff0000"/>
<line x1="646.5" y1="188.5" x2="700.5" y2="186.5" stroke="#ff0000"/>
<polyline points="646.5,186.5 638.5,194.5" stroke="#ff0000" fill="none"/>
<rect x="660.5" y="182.5" width="4" height="10" stroke="#ff0000" fill="none"/>
<rect x="653.5" y="199.5" width="3" height="4" stroke="#ff0000" fill="none"/>
<rect x="653.5" y="218.5" width="3" height="4" stroke="#ff0000" fill="none"/>
<line x1="649.5" y1="217.5" x2="649.5" y2="231.5" stroke="#0000ff"/>
<line x1="646.5" y1="220.5" x2="652.5" y2="220.5" stroke="#0000ff"/>
<line x1="646.5" y1="229.5" x2="652.5" y2="229.5" stroke="#0000ff"/>
<polyline points="638.5,227.5 653.5,215.5" stroke="#ff0000" fill="none"/>
<polyline points="638.5,229.5 653.5,219.5" stroke="#ff0000" fill="none"/>
<line x1="682.5" y1="174.5" x2="682.5" y2="238.5" stroke="#0000ff"/>
<line x1="671.5" y1="219.5" x2="700.5" y2="219.5" stroke="#0000ff"/>
<polyline points="700.5,208.5 688.5,215.5 687.5,225.5 698.5,232.5 700.5,232.5" stroke="#ff0000" fill="none"/>
<line x1="692.5" y1="176.5" x2="692.5" y2="192.5" stroke="#0000ff"/>
<rect x="690.5" y="180.5" width="10" height="3" stroke="#ff0000" fill="none"/>
<line x1="682.5" y1="186.5" x2="700.5" y2="186.5" stroke="#ff0000"/>
<line x1="617.5" y1="274.5" x2="700.5" y2="274.5" stroke="#ff0000"/>
<line x1="595.5" y1="231.5" x2="700.5" y2="231.5" stroke="#ff0000"/>
<line x1="594.5" y1="232.5" x2="700.5" y2="232.5" stroke="#ff0000"/>
<line x1="693.5" y1="231.5" x2="693.5" y2="274.5" stroke="#ff0000"/>
<line x1="697.5" y1="231.5" x2="697.5" y2="274.5" stroke="#ff0000"/>
<line x1="590.5" y1="288.5" x2="645.5" y2="288.5" stroke="#ff0000"/>
<line x1="650.5" y1="288.5" x2="700.5" y2="288.5" stroke="#ff0000"/>
<line x1="648.5" y1="290.5" x2="667.5" y2="290.5" stroke="#ff0000"/>
<line x1="648.5" y1="292.5" x2="670.5" y2="292.5" stroke="#ff0000"/>
<path d="M667,290.5 Q685,287 697,276 Q705,265 706,240" stroke="#ff0000" fill="none"/>
<path d="M670,292.5 Q690,290 700,279 Q709,266 709,238" stroke="#ff0000" fill="none"/>
<rect x="623.5" y="283.5" width="4" height="8" stroke="#ff0000" fill="none"/>
<rect x="662.5" y="283.5" width="4" height="5" stroke="#ff0000" fill="none"/>
<rect x="666.5" y="287.5" width="4" height="5" stroke="#ff0000" fill="none"/>
<rect x="644.5" y="281.5" width="6" height="4" stroke="#ff0000" fill="none"/>
<line x1="645.5" y1="285.5" x2="645.5" y2="296.5" stroke="#ff0000"/>
<line x1="648.5" y1="285.5" x2="648.5" y2="296.5" stroke="#ff0000"/>
<rect x="636.5" y="296.5" width="20" height="17" stroke="#ff0000" fill="none"/>
<line x1="636.5" y1="299.5" x2="656.5" y2="299.5" stroke="#ff0000"/>
<line x1="634.5" y1="296.5" x2="658.5" y2="296.5" stroke="#ff0000"/>
<line x1="634.5" y1="310.5" x2="658.5" y2="310.5" stroke="#ff0000"/>
<rect x="582.5" y="316.5" width="81" height="3" stroke="#ff0000" fill="none"/>
<line x1="585.5" y1="319.5" x2="585.5" y2="364.5" stroke="#ff0000"/>
<line x1="661.5" y1="319.5" x2="661.5" y2="364.5" stroke="#ff0000"/>
<line x1="585.5" y1="364.5" x2="661.5" y2="364.5" stroke="#ff0000"/>
<polygon points="585.5,307.5 603.5,307.5 600.5,316.5 588.5,316.5" stroke="#ff0000" fill="none"/>
<circle cx="586" cy="363" r="4" stroke="#ff0000" fill="none"/>
<line x1="581.5" y1="363.5" x2="591.5" y2="363.5" stroke="#0000ff"/>
<line x1="586.5" y1="358.5" x2="586.5" y2="368.5" stroke="#0000ff"/>
<circle cx="657" cy="363" r="4" stroke="#ff0000" fill="none"/>
<line x1="652.5" y1="363.5" x2="662.5" y2="363.5" stroke="#0000ff"/>
<line x1="657.5" y1="358.5" x2="657.5" y2="368.5" stroke="#0000ff"/>
<polyline points="591.5,364.5 591.5,369.5 757.5,369.5" stroke="#ff0000" fill="none"/>
<line x1="591.5" y1="366.5" x2="700.5" y2="366.5" stroke="#ff0000"/>
<polyline points="612.5,369.5 612.5,365.5 680.5,365.5 680.5,369.5" stroke="#ff0000" fill="none"/>
<rect x="680.5" y="304.5" width="20" height="29" stroke="#ff0000" fill="none"/>
<path d="M680,316 Q674,318 675,323 Q676,328 680,329" stroke="#ff0000" fill="none"/>
<line x1="673.5" y1="323.5" x2="683.5" y2="323.5" stroke="#0000ff"/>
<line x1="542.5" y1="411.5" x2="551.5" y2="411.5" stroke="#00ff00"/>
<path d="M544,406h1v1h-1zM543,407h1v1h-1zM544,407h1v1h-1zM544,408h1v1h-1zM544,409h1v1h-1zM544,410h1v1h-1zM546,406h1v1h-1zM547,406h1v1h-1zM548,406h1v1h-1zM546,407h1v1h-1zM548,407h1v1h-1zM546,408h1v1h-1zM548,408h1v1h-1zM546,409h1v1h-1zM548,409h1v1h-1zM546,410h1v1h-1zM547,410h1v1h-1zM548,410h1v1h-1z" fill="#00ff00" stroke="none"/>
<line x1="551.5" y1="411.5" x2="613.5" y2="338.5" stroke="#00ff00"/>
<line x1="606.5" y1="411.5" x2="614.5" y2="411.5" stroke="#00ff00"/>
<path d="M609,406h1v1h-1zM610,406h1v1h-1zM611,406h1v1h-1zM609,407h1v1h-1zM611,407h1v1h-1zM609,408h1v1h-1zM610,408h1v1h-1zM611,408h1v1h-1zM611,409h1v1h-1zM609,410h1v1h-1zM610,410h1v1h-1zM611,410h1v1h-1z" fill="#00ff00" stroke="none"/>
<line x1="614.5" y1="411.5" x2="647.5" y2="308.5" stroke="#00ff00"/>
<line x1="570.5" y1="358.5" x2="570.5" y2="428.5" stroke="#00ff00"/>
<line x1="801.5" y1="302.5" x2="801.5" y2="428.5" stroke="#00ff00"/>
<line x1="570.5" y1="427.5" x2="801.5" y2="427.5" stroke="#00ff00"/>
<text x="680" y="427" fill="#00ff00" font-size="5" font-weight="bold" letter-spacing="-0.5">1700</text>
<polyline points="729.5,167.5 743.5,168.5 752.5,177.5 766.5,209.5 767.5,214.5 767.5,229.5 755.5,233.5 727.5,236.5 712.5,238.5 705.5,234.5 698.5,223.5 700.5,213.5 703.5,202.5 719.5,177.5 729.5,167.5" stroke="#ff0000" fill="none"/>
<polyline points="764.5,210.5 765.5,227.5 756.5,232.5" stroke="#ff0000" fill="none"/>
<polyline points="716.5,212.5 716.5,227.5 709.5,236.5 702.5,245.5" stroke="#ff0000" fill="none"/>
<polyline points="719.5,212.5 719.5,228.5 712.5,237.5 705.5,246.5" stroke="#ff0000" fill="none"/>
<line x1="729.5" y1="186.5" x2="743.5" y2="186.5" stroke="#0000ff"/>
<line x1="736.5" y1="179.5" x2="736.5" y2="193.5" stroke="#0000ff"/>
<line x1="740.5" y1="215.5" x2="755.5" y2="215.5" stroke="#0000ff"/>
<line x1="748.5" y1="207.5" x2="748.5" y2="222.5" stroke="#0000ff"/>
<line x1="711.5" y1="220.5" x2="725.5" y2="220.5" stroke="#0000ff"/>
<line x1="718.5" y1="214.5" x2="718.5" y2="226.5" stroke="#0000ff"/>
<line x1="694.5" y1="162.5" x2="709.5" y2="171.5" stroke="#ff0000"/>
<line x1="694.5" y1="163.5" x2="708.5" y2="172.5" stroke="#ff0000"/>
<circle cx="711.5" cy="174.5" r="3.5" stroke="#ff0000" fill="none"/>
<circle cx="711.5" cy="174.5" r="2" stroke="#ff0000" fill="none"/>
<line x1="694.5" y1="162.5" x2="682.5" y2="180.5" stroke="#ff0000"/>
<line x1="694.5" y1="164.5" x2="684.5" y2="181.5" stroke="#ff0000"/>
<line x1="699.5" y1="181.5" x2="699.5" y2="209.5" stroke="#ff0000"/>
<line x1="703.5" y1="181.5" x2="703.5" y2="209.5" stroke="#ff0000"/>
<line x1="701.5" y1="181.5" x2="701.5" y2="209.5" stroke="#0000ff"/>
<circle cx="682" cy="185" r="3" stroke="#ff0000" fill="none"/>
<rect x="712.5" y="237.5" width="45" height="3" stroke="#ff0000" fill="none"/>
<line x1="718.5" y1="246.5" x2="755.5" y2="240.5" stroke="#ff0000"/>
<line x1="718.5" y1="248.5" x2="755.5" y2="242.5" stroke="#ff0000"/>
<polyline points="712.5,240.5 718.5,246.5 718.5,249.5" stroke="#ff0000" fill="none"/>
<polyline points="757.5,240.5 753.5,249.5" stroke="#ff0000" fill="none"/>
<rect x="712.5" y="249.5" width="49" height="17" stroke="#ff0000" fill="none"/>
<rect x="713.5" y="256.5" width="47" height="4" stroke="#ff0000" fill="none" rx="2"/>
<rect x="718.5" y="266.5" width="36" height="17" stroke="#ff0000" fill="none"/>
<line x1="721.5" y1="266.5" x2="721.5" y2="283.5" stroke="#ff0000"/>
<line x1="743.5" y1="266.5" x2="743.5" y2="283.5" stroke="#ff0000"/>
<line x1="746.5" y1="266.5" x2="746.5" y2="283.5" stroke="#ff0000"/>
<line x1="748.5" y1="266.5" x2="748.5" y2="283.5" stroke="#ff0000"/>
<path d="M723,276 Q727,266 731,272 Q735,266 739,276" stroke="#ff0000" fill="none"/>
<circle cx="731" cy="272" r="2" stroke="#ff0000" fill="none"/>
<line x1="726.5" y1="272.5" x2="736.5" y2="272.5" stroke="#0000ff"/>
<line x1="731.5" y1="267.5" x2="731.5" y2="277.5" stroke="#0000ff"/>
<line x1="701.5" y1="288.5" x2="701.5" y2="369.5" stroke="#ff0000"/>
<line x1="757.5" y1="288.5" x2="757.5" y2="369.5" stroke="#ff0000"/>
<line x1="714.5" y1="266.5" x2="714.5" y2="289.5" stroke="#ff0000"/>
<line x1="701.5" y1="289.5" x2="714.5" y2="289.5" stroke="#ff0000"/>
<line x1="705.5" y1="270.5" x2="705.5" y2="290.5" stroke="#ff0000"/>
<path d="M700,225 Q706,240 703,260 L702,288" stroke="#ff0000" fill="none"/>
<path d="M704,225 Q710,240 707,262 L706,270" stroke="#ff0000" fill="none"/>
<defs><pattern id="hat" width="3" height="3" patternUnits="userSpaceOnUse" patternTransform="rotate(45)"><line x1="0" y1="0" x2="0" y2="3" stroke="#00ff00" stroke-width="1.2"/></pattern></defs>
<path d="M701,350 H708 V360 H751 V350 H757 V369 H751 V366 H708 V369 H701 Z" fill="url(#hat)" stroke="none"/>
<polyline points="701.5,350.5 708.5,351.5 710.5,352.5 717.5,352.5 723.5,354.5 742.5,354.5 746.5,352.5 751.5,352.5 757.5,350.5" stroke="#00ff00" fill="none"/>
<polyline points="708.5,352.5 708.5,359.5 751.5,359.5 751.5,352.5" stroke="#ff0000" fill="none"/>
<polyline points="708.5,369.5 708.5,366.5 751.5,366.5 751.5,369.5" stroke="#ff0000" fill="none"/>
<line x1="701.5" y1="369.5" x2="757.5" y2="369.5" stroke="#ff0000"/>
<rect x="759.5" y="272.5" width="16" height="51" stroke="#ff0000" fill="none"/>
<rect x="766.5" y="262.5" width="5" height="10" stroke="#ff0000" fill="none"/>
<rect x="760.5" y="258.5" width="12" height="4" stroke="#ff0000" fill="none"/>
<line x1="760.5" y1="260.5" x2="775.5" y2="260.5" stroke="#0000ff"/>
<line x1="758.5" y1="263.5" x2="777.5" y2="263.5" stroke="#0000ff"/>
<rect x="783.5" y="267.5" width="4" height="37" stroke="#ff0000" fill="none" rx="2"/>
<rect x="775.5" y="282.5" width="4" height="8" stroke="#ff0000" fill="none"/>
<line x1="779.5" y1="282.5" x2="783.5" y2="274.5" stroke="#ff0000"/>
<line x1="779.5" y1="290.5" x2="783.5" y2="298.5" stroke="#ff0000"/>
<path d="M787,301 H793 Q795,300 797,301 H802 V303 H797 Q795,304 793,303 H787" stroke="#ff0000" fill="none"/>
<line x1="769.5" y1="275.5" x2="781.5" y2="275.5" stroke="#0000ff"/>
<line x1="767.5" y1="286.5" x2="796.5" y2="286.5" stroke="#0000ff"/>
<line x1="779.5" y1="301.5" x2="806.5" y2="301.5" stroke="#0000ff"/>
<line x1="770.5" y1="317.5" x2="781.5" y2="317.5" stroke="#0000ff"/>
<rect x="758.5" y="350.5" width="17" height="5" stroke="#ff0000" fill="none"/>
<line x1="758.5" y1="352.5" x2="764.5" y2="352.5" stroke="#0000ff"/>
<line x1="761.5" y1="349.5" x2="761.5" y2="355.5" stroke="#0000ff"/>
<rect x="757.5" y="344.5" width="7" height="5" stroke="#ff0000" fill="none"/>
<line x1="761.5" y1="300.5" x2="761.5" y2="344.5" stroke="#ff0000"/>
<line x1="746.5" y1="459.5" x2="846.5" y2="459.5" stroke="#00ff00"/>
<line x1="746.5" y1="465.5" x2="846.5" y2="465.5" stroke="#00ff00"/>
<line x1="746.5" y1="471.5" x2="846.5" y2="471.5" stroke="#00ff00"/>
<line x1="746.5" y1="476.5" x2="846.5" y2="476.5" stroke="#00ff00"/>
<line x1="746.5" y1="482.5" x2="846.5" y2="482.5" stroke="#00ff00"/>
<line x1="746.5" y1="488.5" x2="846.5" y2="488.5" stroke="#00ff00"/>
<line x1="746.5" y1="494.5" x2="846.5" y2="494.5" stroke="#00ff00"/>
<line x1="746.5" y1="499.5" x2="846.5" y2="499.5" stroke="#00ff00"/>
<line x1="746.5" y1="505.5" x2="846.5" y2="505.5" stroke="#00ff00"/>
<line x1="746.5" y1="511.5" x2="846.5" y2="511.5" stroke="#00ff00"/>
<line x1="746.5" y1="516.5" x2="846.5" y2="516.5" stroke="#00ff00"/>
<line x1="746.5" y1="522.5" x2="846.5" y2="522.5" stroke="#00ff00"/>
<line x1="746.5" y1="528.5" x2="846.5" y2="528.5" stroke="#00ff00"/>
<line x1="746.5" y1="533.5" x2="846.5" y2="533.5" stroke="#00ff00"/>
<line x1="746.5" y1="539.5" x2="846.5" y2="539.5" stroke="#00ff00"/>
<line x1="746.5" y1="545.5" x2="846.5" y2="545.5" stroke="#00ff00"/>
<line x1="746.5" y1="551.5" x2="846.5" y2="551.5" stroke="#00ff00"/>
<line x1="746.5" y1="556.5" x2="846.5" y2="556.5" stroke="#00ff00"/>
<line x1="746.5" y1="562.5" x2="846.5" y2="562.5" stroke="#00ff00"/>
<line x1="746.5" y1="568.5" x2="846.5" y2="568.5" stroke="#00ff00"/>
<line x1="746.5" y1="459.5" x2="746.5" y2="568.5" stroke="#00ff00"/>
<line x1="757.5" y1="459.5" x2="757.5" y2="568.5" stroke="#00ff00"/>
<line x1="789.5" y1="459.5" x2="789.5" y2="568.5" stroke="#00ff00"/>
<line x1="800.5" y1="459.5" x2="800.5" y2="568.5" stroke="#00ff00"/>
<line x1="825.5" y1="459.5" x2="825.5" y2="568.5" stroke="#00ff00"/>
<line x1="846.5" y1="459.5" x2="846.5" y2="568.5" stroke="#00ff00"/>
<line x1="746.5" y1="580.5" x2="846.5" y2="580.5" stroke="#00ff00"/>
<line x1="746.5" y1="585.5" x2="789.5" y2="585.5" stroke="#00ff00"/>
<line x1="789.5" y1="568.5" x2="789.5" y2="591.5" stroke="#00ff00"/>
<line x1="757.5" y1="580.5" x2="757.5" y2="591.5" stroke="#00ff00"/>
<line x1="775.5" y1="580.5" x2="775.5" y2="591.5" stroke="#00ff00"/>
<line x1="807.5" y1="568.5" x2="807.5" y2="580.5" stroke="#00ff00"/>
<line x1="825.5" y1="568.5" x2="825.5" y2="580.5" stroke="#00ff00"/>
<line x1="835.5" y1="568.5" x2="835.5" y2="580.5" stroke="#00ff00"/>
<line x1="746.5" y1="591.5" x2="846.5" y2="591.5" stroke="#00ff00"/>
<line x1="746.5" y1="459.5" x2="746.5" y2="591.5" stroke="#00ff00"/>
<line x1="846.5" y1="459.5" x2="846.5" y2="591.5" stroke="#00ff00"/>
<line x1="747.5" y1="591.5" x2="756.5" y2="591.5" stroke="#ffffff"/>
<line x1="758.5" y1="591.5" x2="775.5" y2="591.5" stroke="#ffffff"/>
<line x1="776.5" y1="591.5" x2="789.5" y2="591.5" stroke="#ffffff"/>
<rect x="765" y="461" width="8" height="3" fill="#00ff00" stroke="none"/>
<path d="M750,461h1v1h-1zM749,462h1v1h-1zM750,462h1v1h-1zM750,463h1v1h-1zM750,464h1v1h-1zM752,461h1v1h-1zM753,461h1v1h-1zM754,461h1v1h-1zM752,462h1v1h-1zM754,462h1v1h-1zM752,463h1v1h-1zM753,463h1v1h-1zM754,463h1v1h-1zM752,464h1v1h-1zM753,464h1v1h-1zM754,464h1v1h-1z" fill="#00ff00" stroke="none"/>
<path d="M795,461h1v1h-1zM794,462h1v1h-1zM795,462h1v1h-1zM795,463h1v1h-1zM795,464h1v1h-1z" fill="#00ff00" stroke="none"/>
<path d="M831,461h1v1h-1zM833,461h1v1h-1zM831,462h1v1h-1zM832,462h1v1h-1zM833,462h1v1h-1zM831,463h1v1h-1zM832,463h1v1h-1zM833,463h1v1h-1zM831,464h1v1h-1zM833,464h1v1h-1zM834,461h1v1h-1zM835,461h1v1h-1zM836,461h1v1h-1zM834,462h1v1h-1zM836,462h1v1h-1zM834,463h1v1h-1zM835,463h1v1h-1zM836,463h1v1h-1zM834,464h1v1h-1zM835,464h1v1h-1zM836,464h1v1h-1zM837,462h1v1h-1zM839,462h1v1h-1zM838,463h1v1h-1z" fill="#00ff00" stroke="none"/>
<path d="M806,461h1v1h-1zM808,461h1v1h-1zM806,462h1v1h-1zM808,462h1v1h-1zM806,463h1v1h-1zM807,463h1v1h-1zM808,463h1v1h-1zM806,464h1v1h-1zM808,464h1v1h-1zM809,461h1v1h-1zM810,461h1v1h-1zM811,461h1v1h-1zM810,462h1v1h-1zM810,463h1v1h-1zM810,464h1v1h-1zM812,461h1v1h-1zM813,461h1v1h-1zM814,461h1v1h-1zM814,462h1v1h-1zM812,463h1v1h-1zM813,463h1v1h-1zM814,463h1v1h-1zM812,464h1v1h-1zM813,464h1v1h-1zM814,464h1v1h-1zM815,461h1v1h-1zM816,461h1v1h-1zM817,461h1v1h-1zM815,462h1v1h-1zM817,462h1v1h-1zM815,463h1v1h-1zM817,463h1v1h-1zM815,464h1v1h-1zM816,464h1v1h-1zM817,464h1v1h-1z" fill="#00ff00" stroke="none"/>
<rect x="762" y="467" width="21" height="3" fill="#00ff00" stroke="none"/>
<path d="M750,467h1v1h-1zM749,468h1v1h-1zM750,468h1v1h-1zM750,469h1v1h-1zM750,470h1v1h-1zM752,467h1v1h-1zM753,467h1v1h-1zM754,467h1v1h-1zM754,468h1v1h-1zM754,469h1v1h-1zM754,470h1v1h-1z" fill="#00ff00" stroke="none"/>
<path d="M795,467h1v1h-1zM794,468h1v1h-1zM795,468h1v1h-1zM795,469h1v1h-1zM795,470h1v1h-1z" fill="#00ff00" stroke="none"/>
<path d="M831,467h1v1h-1zM833,467h1v1h-1zM831,468h1v1h-1zM832,468h1v1h-1zM833,468h1v1h-1zM831,469h1v1h-1zM832,469h1v1h-1zM833,469h1v1h-1zM831,470h1v1h-1zM833,470h1v1h-1zM834,467h1v1h-1zM835,467h1v1h-1zM836,467h1v1h-1zM834,468h1v1h-1zM834,469h1v1h-1zM835,469h1v1h-1zM836,469h1v1h-1zM834,470h1v1h-1zM835,470h1v1h-1zM836,470h1v1h-1zM837,468h1v1h-1zM839,468h1v1h-1zM838,469h1v1h-1z" fill="#00ff00" stroke="none"/>
<path d="M806,467h1v1h-1zM808,467h1v1h-1zM806,468h1v1h-1zM808,468h1v1h-1zM806,469h1v1h-1zM807,469h1v1h-1zM808,469h1v1h-1zM806,470h1v1h-1zM808,470h1v1h-1zM809,467h1v1h-1zM810,467h1v1h-1zM811,467h1v1h-1zM810,468h1v1h-1zM810,469h1v1h-1zM810,470h1v1h-1zM812,467h1v1h-1zM813,467h1v1h-1zM814,467h1v1h-1zM814,468h1v1h-1zM812,469h1v1h-1zM813,469h1v1h-1zM814,469h1v1h-1zM812,470h1v1h-1zM813,470h1v1h-1zM814,470h1v1h-1zM815,467h1v1h-1zM816,467h1v1h-1zM817,467h1v1h-1zM815,468h1v1h-1zM817,468h1v1h-1zM815,469h1v1h-1zM817,469h1v1h-1zM815,470h1v1h-1zM816,470h1v1h-1zM817,470h1v1h-1z" fill="#00ff00" stroke="none"/>
<rect x="760" y="473" width="25" height="2" fill="#00ff00" stroke="none"/>
<path d="M750,472h1v1h-1zM749,473h1v1h-1zM750,473h1v1h-1zM750,474h1v1h-1zM750,475h1v1h-1zM752,472h1v1h-1zM753,472h1v1h-1zM754,472h1v1h-1zM752,473h1v1h-1zM752,474h1v1h-1zM753,474h1v1h-1zM754,474h1v1h-1zM752,475h1v1h-1zM753,475h1v1h-1zM754,475h1v1h-1z" fill="#00ff00" stroke="none"/>
<path d="M795,472h1v1h-1zM794,473h1v1h-1zM795,473h1v1h-1zM795,474h1v1h-1zM795,475h1v1h-1z" fill="#00ff00" stroke="none"/>
<path d="M831,472h1v1h-1zM833,472h1v1h-1zM831,473h1v1h-1zM832,473h1v1h-1zM833,473h1v1h-1zM831,474h1v1h-1zM832,474h1v1h-1zM833,474h1v1h-1zM831,475h1v1h-1zM833,475h1v1h-1zM834,472h1v1h-1zM835,472h1v1h-1zM836,472h1v1h-1zM834,473h1v1h-1zM836,473h1v1h-1zM834,474h1v1h-1zM835,474h1v1h-1zM836,474h1v1h-1zM834,475h1v1h-1zM835,475h1v1h-1zM836,475h1v1h-1zM837,474h1v1h-1zM838,474h1v1h-1zM839,474h1v1h-1z" fill="#00ff00" stroke="none"/>
<path d="M806,472h1v1h-1zM808,472h1v1h-1zM806,473h1v1h-1zM808,473h1v1h-1zM806,474h1v1h-1zM807,474h1v1h-1zM808,474h1v1h-1zM806,475h1v1h-1zM808,475h1v1h-1zM809,472h1v1h-1zM810,472h1v1h-1zM811,472h1v1h-1zM810,473h1v1h-1zM810,474h1v1h-1zM810,475h1v1h-1zM812,472h1v1h-1zM813,472h1v1h-1zM814,472h1v1h-1zM814,473h1v1h-1zM812,474h1v1h-1zM813,474h1v1h-1zM814,474h1v1h-1zM812,475h1v1h-1zM813,475h1v1h-1zM814,475h1v1h-1zM815,472h1v1h-1zM816,472h1v1h-1zM817,472h1v1h-1zM815,473h1v1h-1zM817,473h1v1h-1zM815,474h1v1h-1zM817,474h1v1h-1zM815,475h1v1h-1zM816,475h1v1h-1zM817,475h1v1h-1z" fill="#00ff00" stroke="none"/>
<rect x="768" y="478" width="7" height="3" fill="#00ff00" stroke="none"/>
<path d="M750,478h1v1h-1zM749,479h1v1h-1zM750,479h1v1h-1zM750,480h1v1h-1zM750,481h1v1h-1zM752,478h1v1h-1zM753,478h1v1h-1zM754,478h1v1h-1zM752,479h1v1h-1zM752,480h1v1h-1zM753,480h1v1h-1zM754,480h1v1h-1zM752,481h1v1h-1zM753,481h1v1h-1zM754,481h1v1h-1z" fill="#00ff00" stroke="none"/>
<path d="M795,478h1v1h-1zM794,479h1v1h-1zM795,479h1v1h-1zM795,480h1v1h-1zM795,481h1v1h-1z" fill="#00ff00" stroke="none"/>
<path d="M831,478h1v1h-1zM833,478h1v1h-1zM831,479h1v1h-1zM832,479h1v1h-1zM833,479h1v1h-1zM831,480h1v1h-1zM832,480h1v1h-1zM833,480h1v1h-1zM831,481h1v1h-1zM833,481h1v1h-1zM835,478h1v1h-1zM834,479h1v1h-1zM835,479h1v1h-1zM835,480h1v1h-1zM835,481h1v1h-1zM836,478h1v1h-1zM837,478h1v1h-1zM838,478h1v1h-1zM836,479h1v1h-1zM838,479h1v1h-1zM836,480h1v1h-1zM838,480h1v1h-1zM836,481h1v1h-1zM837,481h1v1h-1zM838,481h1v1h-1z" fill="#00ff00" stroke="none"/>
<path d="M806,478h1v1h-1zM808,478h1v1h-1zM806,479h1v1h-1zM808,479h1v1h-1zM806,480h1v1h-1zM807,480h1v1h-1zM808,480h1v1h-1zM806,481h1v1h-1zM808,481h1v1h-1zM809,478h1v1h-1zM810,478h1v1h-1zM811,478h1v1h-1zM810,479h1v1h-1zM810,480h1v1h-1zM810,481h1v1h-1zM812,478h1v1h-1zM813,478h1v1h-1zM814,478h1v1h-1zM814,479h1v1h-1zM812,480h1v1h-1zM813,480h1v1h-1zM814,480h1v1h-1zM812,481h1v1h-1zM813,481h1v1h-1zM814,481h1v1h-1zM815,478h1v1h-1zM816,478h1v1h-1zM817,478h1v1h-1zM815,479h1v1h-1zM817,479h1v1h-1zM815,480h1v1h-1zM817,480h1v1h-1zM815,481h1v1h-1zM816,481h1v1h-1zM817,481h1v1h-1z" fill="#00ff00" stroke="none"/>
<rect x="758" y="484" width="28" height="3" fill="#00ff00" stroke="none"/>
<path d="M750,484h1v1h-1zM749,485h1v1h-1zM750,485h1v1h-1zM750,486h1v1h-1zM750,487h1v1h-1zM752,484h1v1h-1zM754,484h1v1h-1zM752,485h1v1h-1zM754,485h1v1h-1zM752,486h1v1h-1zM753,486h1v1h-1zM754,486h1v1h-1zM754,487h1v1h-1z" fill="#00ff00" stroke="none"/>
<path d="M795,484h1v1h-1zM794,485h1v1h-1zM795,485h1v1h-1zM795,486h1v1h-1zM795,487h1v1h-1z" fill="#00ff00" stroke="none"/>
<path d="M831,484h1v1h-1zM833,484h1v1h-1zM831,485h1v1h-1zM832,485h1v1h-1zM833,485h1v1h-1zM831,486h1v1h-1zM832,486h1v1h-1zM833,486h1v1h-1zM831,487h1v1h-1zM833,487h1v1h-1zM834,484h1v1h-1zM835,484h1v1h-1zM836,484h1v1h-1zM834,485h1v1h-1zM836,485h1v1h-1zM834,486h1v1h-1zM835,486h1v1h-1zM836,486h1v1h-1zM834,487h1v1h-1zM835,487h1v1h-1zM836,487h1v1h-1zM837,485h1v1h-1zM839,485h1v1h-1zM838,486h1v1h-1z" fill="#00ff00" stroke="none"/>
<path d="M806,484h1v1h-1zM808,484h1v1h-1zM806,485h1v1h-1zM808,485h1v1h-1zM806,486h1v1h-1zM807,486h1v1h-1zM808,486h1v1h-1zM806,487h1v1h-1zM808,487h1v1h-1zM809,484h1v1h-1zM810,484h1v1h-1zM811,484h1v1h-1zM810,485h1v1h-1zM810,486h1v1h-1zM810,487h1v1h-1zM812,484h1v1h-1zM813,484h1v1h-1zM814,484h1v1h-1zM814,485h1v1h-1zM812,486h1v1h-1zM813,486h1v1h-1zM814,486h1v1h-1zM812,487h1v1h-1zM813,487h1v1h-1zM814,487h1v1h-1zM815,484h1v1h-1zM816,484h1v1h-1zM817,484h1v1h-1zM815,485h1v1h-1zM817,485h1v1h-1zM815,486h1v1h-1zM817,486h1v1h-1zM815,487h1v1h-1zM816,487h1v1h-1zM817,487h1v1h-1z" fill="#00ff00" stroke="none"/>
<rect x="768" y="490" width="7" height="3" fill="#00ff00" stroke="none"/>
<path d="M750,490h1v1h-1zM749,491h1v1h-1zM750,491h1v1h-1zM750,492h1v1h-1zM750,493h1v1h-1zM752,490h1v1h-1zM753,490h1v1h-1zM754,490h1v1h-1zM754,491h1v1h-1zM752,492h1v1h-1zM753,492h1v1h-1zM754,492h1v1h-1zM752,493h1v1h-1zM753,493h1v1h-1zM754,493h1v1h-1z" fill="#00ff00" stroke="none"/>
<path d="M795,490h1v1h-1zM794,491h1v1h-1zM795,491h1v1h-1zM795,492h1v1h-1zM795,493h1v1h-1z" fill="#00ff00" stroke="none"/>
<path d="M831,490h1v1h-1zM833,490h1v1h-1zM831,491h1v1h-1zM832,491h1v1h-1zM833,491h1v1h-1zM831,492h1v1h-1zM832,492h1v1h-1zM833,492h1v1h-1zM831,493h1v1h-1zM833,493h1v1h-1zM834,490h1v1h-1zM835,490h1v1h-1zM836,490h1v1h-1zM834,491h1v1h-1zM834,492h1v1h-1zM835,492h1v1h-1zM836,492h1v1h-1zM834,493h1v1h-1zM835,493h1v1h-1zM836,493h1v1h-1zM837,491h1v1h-1zM839,491h1v1h-1zM838,492h1v1h-1z" fill="#00ff00" stroke="none"/>
<rect x="763" y="496" width="17" height="2" fill="#00ff00" stroke="none"/>
<path d="M750,495h1v1h-1zM749,496h1v1h-1zM750,496h1v1h-1zM750,497h1v1h-1zM750,498h1v1h-1zM752,495h1v1h-1zM753,495h1v1h-1zM754,495h1v1h-1zM754,496h1v1h-1zM752,497h1v1h-1zM753,497h1v1h-1zM754,497h1v1h-1zM752,498h1v1h-1zM753,498h1v1h-1zM754,498h1v1h-1z" fill="#00ff00" stroke="none"/>
<path d="M795,495h1v1h-1zM794,496h1v1h-1zM795,496h1v1h-1zM795,497h1v1h-1zM795,498h1v1h-1z" fill="#00ff00" stroke="none"/>
<path d="M831,495h1v1h-1zM833,495h1v1h-1zM831,496h1v1h-1zM832,496h1v1h-1zM833,496h1v1h-1zM831,497h1v1h-1zM832,497h1v1h-1zM833,497h1v1h-1zM831,498h1v1h-1zM833,498h1v1h-1zM834,495h1v1h-1zM836,495h1v1h-1zM834,496h1v1h-1zM836,496h1v1h-1zM834,497h1v1h-1zM835,497h1v1h-1zM836,497h1v1h-1zM836,498h1v1h-1zM837,496h1v1h-1zM839,496h1v1h-1zM838,497h1v1h-1z" fill="#00ff00" stroke="none"/>
<path d="M807,495h1v1h-1zM808,495h1v1h-1zM809,495h1v1h-1zM807,496h1v1h-1zM809,496h1v1h-1zM807,497h1v1h-1zM809,497h1v1h-1zM809,498h1v1h-1zM811,495h1v1h-1zM812,495h1v1h-1zM813,495h1v1h-1zM813,496h1v1h-1zM811,497h1v1h-1zM812,497h1v1h-1zM813,497h1v1h-1zM811,498h1v1h-1zM812,498h1v1h-1zM813,498h1v1h-1zM815,495h1v1h-1zM816,495h1v1h-1zM817,495h1v1h-1zM817,496h1v1h-1zM815,497h1v1h-1zM816,497h1v1h-1zM817,497h1v1h-1zM815,498h1v1h-1zM816,498h1v1h-1zM817,498h1v1h-1z" fill="#00ff00" stroke="none"/>
<rect x="766" y="501" width="11" height="3" fill="#00ff00" stroke="none"/>
<path d="M750,501h1v1h-1zM749,502h1v1h-1zM750,502h1v1h-1zM750,503h1v1h-1zM750,504h1v1h-1zM753,501h1v1h-1zM752,502h1v1h-1zM753,502h1v1h-1zM753,503h1v1h-1zM753,504h1v1h-1z" fill="#00ff00" stroke="none"/>
<path d="M795,501h1v1h-1zM794,502h1v1h-1zM795,502h1v1h-1zM795,503h1v1h-1zM795,504h1v1h-1z" fill="#00ff00" stroke="none"/>
<path d="M831,501h1v1h-1zM833,501h1v1h-1zM831,502h1v1h-1zM832,502h1v1h-1zM833,502h1v1h-1zM831,503h1v1h-1zM832,503h1v1h-1zM833,503h1v1h-1zM831,504h1v1h-1zM833,504h1v1h-1zM834,501h1v1h-1zM835,501h1v1h-1zM836,501h1v1h-1zM834,502h1v1h-1zM834,503h1v1h-1zM835,503h1v1h-1zM836,503h1v1h-1zM834,504h1v1h-1zM835,504h1v1h-1zM836,504h1v1h-1zM837,503h1v1h-1zM838,503h1v1h-1zM839,503h1v1h-1z" fill="#00ff00" stroke="none"/>
<rect x="764" y="507" width="15" height="3" fill="#00ff00" stroke="none"/>
<path d="M750,507h1v1h-1zM749,508h1v1h-1zM750,508h1v1h-1zM750,509h1v1h-1zM750,510h1v1h-1zM752,507h1v1h-1zM753,507h1v1h-1zM754,507h1v1h-1zM752,508h1v1h-1zM754,508h1v1h-1zM752,509h1v1h-1zM754,509h1v1h-1zM752,510h1v1h-1zM753,510h1v1h-1zM754,510h1v1h-1z" fill="#00ff00" stroke="none"/>
<path d="M795,507h1v1h-1zM794,508h1v1h-1zM795,508h1v1h-1zM795,509h1v1h-1zM795,510h1v1h-1z" fill="#00ff00" stroke="none"/>
<path d="M831,507h1v1h-1zM833,507h1v1h-1zM831,508h1v1h-1zM832,508h1v1h-1zM833,508h1v1h-1zM831,509h1v1h-1zM832,509h1v1h-1zM833,509h1v1h-1zM831,510h1v1h-1zM833,510h1v1h-1zM834,507h1v1h-1zM835,507h1v1h-1zM836,507h1v1h-1zM834,508h1v1h-1zM836,508h1v1h-1zM834,509h1v1h-1zM835,509h1v1h-1zM836,509h1v1h-1zM834,510h1v1h-1zM835,510h1v1h-1zM836,510h1v1h-1zM837,508h1v1h-1zM839,508h1v1h-1zM838,509h1v1h-1z" fill="#00ff00" stroke="none"/>
<rect x="807" y="506.8" width="10" height="3.2" fill="#00ff00" stroke="none"/>
<rect x="766" y="513" width="11" height="2" fill="#00ff00" stroke="none"/>
<path d="M750,512h1v1h-1zM751,512h1v1h-1zM752,512h1v1h-1zM750,513h1v1h-1zM752,513h1v1h-1zM750,514h1v1h-1zM751,514h1v1h-1zM752,514h1v1h-1zM750,515h1v1h-1zM751,515h1v1h-1zM752,515h1v1h-1z" fill="#00ff00" stroke="none"/>
<path d="M795,512h1v1h-1zM794,513h1v1h-1zM795,513h1v1h-1zM795,514h1v1h-1zM795,515h1v1h-1z" fill="#00ff00" stroke="none"/>
<path d="M831,512h1v1h-1zM833,512h1v1h-1zM831,513h1v1h-1zM832,513h1v1h-1zM833,513h1v1h-1zM831,514h1v1h-1zM832,514h1v1h-1zM833,514h1v1h-1zM831,515h1v1h-1zM833,515h1v1h-1zM835,512h1v1h-1zM834,513h1v1h-1zM835,513h1v1h-1zM835,514h1v1h-1zM835,515h1v1h-1zM836,512h1v1h-1zM837,512h1v1h-1zM838,512h1v1h-1zM838,513h1v1h-1zM836,514h1v1h-1zM837,514h1v1h-1zM838,514h1v1h-1zM836,515h1v1h-1zM837,515h1v1h-1zM838,515h1v1h-1z" fill="#00ff00" stroke="none"/>
<rect x="768" y="518" width="7" height="3" fill="#00ff00" stroke="none"/>
<path d="M750,518h1v1h-1zM751,518h1v1h-1zM752,518h1v1h-1zM750,519h1v1h-1zM752,519h1v1h-1zM750,520h1v1h-1zM751,520h1v1h-1zM752,520h1v1h-1zM750,521h1v1h-1zM751,521h1v1h-1zM752,521h1v1h-1z" fill="#00ff00" stroke="none"/>
<path d="M795,518h1v1h-1zM794,519h1v1h-1zM795,519h1v1h-1zM795,520h1v1h-1zM795,521h1v1h-1z" fill="#00ff00" stroke="none"/>
<path d="M831,518h1v1h-1zM833,518h1v1h-1zM831,519h1v1h-1zM832,519h1v1h-1zM833,519h1v1h-1zM831,520h1v1h-1zM832,520h1v1h-1zM833,520h1v1h-1zM831,521h1v1h-1zM833,521h1v1h-1zM834,518h1v1h-1zM835,518h1v1h-1zM836,518h1v1h-1zM834,519h1v1h-1zM834,520h1v1h-1zM835,520h1v1h-1zM836,520h1v1h-1zM834,521h1v1h-1zM835,521h1v1h-1zM836,521h1v1h-1zM837,519h1v1h-1zM839,519h1v1h-1zM838,520h1v1h-1z" fill="#00ff00" stroke="none"/>
<rect x="768" y="524" width="7" height="3" fill="#00ff00" stroke="none"/>
<path d="M750,524h1v1h-1zM751,524h1v1h-1zM752,524h1v1h-1zM752,525h1v1h-1zM752,526h1v1h-1zM752,527h1v1h-1z" fill="#00ff00" stroke="none"/>
<path d="M795,524h1v1h-1zM794,525h1v1h-1zM795,525h1v1h-1zM795,526h1v1h-1zM795,527h1v1h-1z" fill="#00ff00" stroke="none"/>
<path d="M831,524h1v1h-1zM833,524h1v1h-1zM831,525h1v1h-1zM832,525h1v1h-1zM833,525h1v1h-1zM831,526h1v1h-1zM832,526h1v1h-1zM833,526h1v1h-1zM831,527h1v1h-1zM833,527h1v1h-1zM834,524h1v1h-1zM835,524h1v1h-1zM836,524h1v1h-1zM834,525h1v1h-1zM836,525h1v1h-1zM834,526h1v1h-1zM835,526h1v1h-1zM836,526h1v1h-1zM834,527h1v1h-1zM835,527h1v1h-1zM836,527h1v1h-1zM837,525h1v1h-1zM839,525h1v1h-1zM838,526h1v1h-1z" fill="#00ff00" stroke="none"/>
<rect x="768" y="530" width="7" height="2" fill="#00ff00" stroke="none"/>
<path d="M750,529h1v1h-1zM751,529h1v1h-1zM752,529h1v1h-1zM750,530h1v1h-1zM750,531h1v1h-1zM751,531h1v1h-1zM752,531h1v1h-1zM750,532h1v1h-1zM751,532h1v1h-1zM752,532h1v1h-1z" fill="#00ff00" stroke="none"/>
<path d="M795,529h1v1h-1zM794,530h1v1h-1zM795,530h1v1h-1zM795,531h1v1h-1zM795,532h1v1h-1z" fill="#00ff00" stroke="none"/>
<path d="M831,529h1v1h-1zM833,529h1v1h-1zM831,530h1v1h-1zM832,530h1v1h-1zM833,530h1v1h-1zM831,531h1v1h-1zM832,531h1v1h-1zM833,531h1v1h-1zM831,532h1v1h-1zM833,532h1v1h-1zM834,529h1v1h-1zM835,529h1v1h-1zM836,529h1v1h-1zM834,530h1v1h-1zM834,531h1v1h-1zM835,531h1v1h-1zM836,531h1v1h-1zM834,532h1v1h-1zM835,532h1v1h-1zM836,532h1v1h-1zM837,530h1v1h-1zM839,530h1v1h-1zM838,531h1v1h-1z" fill="#00ff00" stroke="none"/>
<rect x="807" y="529.8" width="10" height="3.2" fill="#00ff00" stroke="none"/>
<rect x="766" y="535" width="11" height="3" fill="#00ff00" stroke="none"/>
<path d="M750,535h1v1h-1zM751,535h1v1h-1zM752,535h1v1h-1zM750,536h1v1h-1zM750,537h1v1h-1zM751,537h1v1h-1zM752,537h1v1h-1zM750,538h1v1h-1zM751,538h1v1h-1zM752,538h1v1h-1z" fill="#00ff00" stroke="none"/>
<path d="M795,535h1v1h-1zM794,536h1v1h-1zM795,536h1v1h-1zM795,537h1v1h-1zM795,538h1v1h-1z" fill="#00ff00" stroke="none"/>
<path d="M831,535h1v1h-1zM833,535h1v1h-1zM831,536h1v1h-1zM832,536h1v1h-1zM833,536h1v1h-1zM831,537h1v1h-1zM832,537h1v1h-1zM833,537h1v1h-1zM831,538h1v1h-1zM833,538h1v1h-1zM834,535h1v1h-1zM835,535h1v1h-1zM836,535h1v1h-1zM834,536h1v1h-1zM836,536h1v1h-1zM834,537h1v1h-1zM835,537h1v1h-1zM836,537h1v1h-1zM834,538h1v1h-1zM835,538h1v1h-1zM836,538h1v1h-1zM837,536h1v1h-1zM839,536h1v1h-1zM838,537h1v1h-1z" fill="#00ff00" stroke="none"/>
<rect x="767" y="541" width="8" height="3" fill="#00ff00" stroke="none"/>
<path d="M750,541h1v1h-1zM752,541h1v1h-1zM750,542h1v1h-1zM752,542h1v1h-1zM750,543h1v1h-1zM751,543h1v1h-1zM752,543h1v1h-1zM752,544h1v1h-1z" fill="#00ff00" stroke="none"/>
<path d="M795,541h1v1h-1zM794,542h1v1h-1zM795,542h1v1h-1zM795,543h1v1h-1zM795,544h1v1h-1z" fill="#00ff00" stroke="none"/>
<path d="M831,541h1v1h-1zM833,541h1v1h-1zM831,542h1v1h-1zM832,542h1v1h-1zM833,542h1v1h-1zM831,543h1v1h-1zM832,543h1v1h-1zM833,543h1v1h-1zM831,544h1v1h-1zM833,544h1v1h-1zM834,541h1v1h-1zM836,541h1v1h-1zM834,542h1v1h-1zM836,542h1v1h-1zM834,543h1v1h-1zM835,543h1v1h-1zM836,543h1v1h-1zM836,544h1v1h-1zM837,542h1v1h-1zM839,542h1v1h-1zM838,543h1v1h-1z" fill="#00ff00" stroke="none"/>
<rect x="768" y="547" width="7" height="3" fill="#00ff00" stroke="none"/>
<path d="M750,547h1v1h-1zM751,547h1v1h-1zM752,547h1v1h-1zM752,548h1v1h-1zM750,549h1v1h-1zM751,549h1v1h-1zM752,549h1v1h-1zM750,550h1v1h-1zM751,550h1v1h-1zM752,550h1v1h-1z" fill="#00ff00" stroke="none"/>
<path d="M795,547h1v1h-1zM794,548h1v1h-1zM795,548h1v1h-1zM795,549h1v1h-1zM795,550h1v1h-1z" fill="#00ff00" stroke="none"/>
<path d="M831,547h1v1h-1zM833,547h1v1h-1zM831,548h1v1h-1zM832,548h1v1h-1zM833,548h1v1h-1zM831,549h1v1h-1zM832,549h1v1h-1zM833,549h1v1h-1zM831,550h1v1h-1zM833,550h1v1h-1zM834,547h1v1h-1zM835,547h1v1h-1zM836,547h1v1h-1zM834,548h1v1h-1zM834,549h1v1h-1zM835,549h1v1h-1zM836,549h1v1h-1zM834,550h1v1h-1zM835,550h1v1h-1zM836,550h1v1h-1zM837,548h1v1h-1zM839,548h1v1h-1zM838,549h1v1h-1z" fill="#00ff00" stroke="none"/>
<rect x="763" y="553" width="18" height="2" fill="#00ff00" stroke="none"/>
<path d="M750,552h1v1h-1zM751,552h1v1h-1zM752,552h1v1h-1zM752,553h1v1h-1zM750,554h1v1h-1zM751,554h1v1h-1zM752,554h1v1h-1zM750,555h1v1h-1zM751,555h1v1h-1zM752,555h1v1h-1z" fill="#00ff00" stroke="none"/>
<path d="M795,552h1v1h-1zM794,553h1v1h-1zM795,553h1v1h-1zM795,554h1v1h-1zM795,555h1v1h-1z" fill="#00ff00" stroke="none"/>
<path d="M831,552h1v1h-1zM833,552h1v1h-1zM831,553h1v1h-1zM832,553h1v1h-1zM833,553h1v1h-1zM831,554h1v1h-1zM832,554h1v1h-1zM833,554h1v1h-1zM831,555h1v1h-1zM833,555h1v1h-1zM834,552h1v1h-1zM835,552h1v1h-1zM836,552h1v1h-1zM834,553h1v1h-1zM836,553h1v1h-1zM834,554h1v1h-1zM835,554h1v1h-1zM836,554h1v1h-1zM834,555h1v1h-1zM835,555h1v1h-1zM836,555h1v1h-1zM837,553h1v1h-1zM839,553h1v1h-1zM838,554h1v1h-1z" fill="#00ff00" stroke="none"/>
<rect x="766" y="558" width="11" height="3" fill="#00ff00" stroke="none"/>
<path d="M751,558h1v1h-1zM750,559h1v1h-1zM751,559h1v1h-1zM751,560h1v1h-1zM751,561h1v1h-1z" fill="#00ff00" stroke="none"/>
<path d="M795,558h1v1h-1zM794,559h1v1h-1zM795,559h1v1h-1zM795,560h1v1h-1zM795,561h1v1h-1z" fill="#00ff00" stroke="none"/>
<path d="M831,558h1v1h-1zM833,558h1v1h-1zM831,559h1v1h-1zM832,559h1v1h-1zM833,559h1v1h-1zM831,560h1v1h-1zM832,560h1v1h-1zM833,560h1v1h-1zM831,561h1v1h-1zM833,561h1v1h-1zM834,558h1v1h-1zM835,558h1v1h-1zM836,558h1v1h-1zM834,559h1v1h-1zM834,560h1v1h-1zM835,560h1v1h-1zM836,560h1v1h-1zM834,561h1v1h-1zM835,561h1v1h-1zM836,561h1v1h-1zM837,559h1v1h-1zM839,559h1v1h-1zM838,560h1v1h-1z" fill="#00ff00" stroke="none"/>
<rect x="748" y="564" width="7" height="4" fill="#00ff00" stroke="none"/>
<rect x="769" y="564" width="8" height="4" fill="#00ff00" stroke="none"/>
<rect x="790" y="564" width="7" height="4" fill="#00ff00" stroke="none"/>
<rect x="808" y="564" width="7" height="4" fill="#00ff00" stroke="none"/>
<rect x="831" y="564" width="8" height="4" fill="#00ff00" stroke="none"/>
<line x1="752.5" y1="573.5" x2="758.5" y2="573.5" stroke="#00ff00"/>
<line x1="755.5" y1="572.5" x2="755.5" y2="578.5" stroke="#00ff00"/>
<line x1="753.5" y1="575.5" x2="757.5" y2="575.5" stroke="#00ff00"/>
<line x1="752.5" y1="578.5" x2="754.5" y2="576.5" stroke="#00ff00"/>
<line x1="756.5" y1="576.5" x2="758.5" y2="578.5" stroke="#00ff00"/>
<line x1="752.5" y1="574.5" x2="752.5" y2="578.5" stroke="#00ff00"/>
<line x1="759.5" y1="573.5" x2="765.5" y2="573.5" stroke="#00ff00"/>
<line x1="762.5" y1="572.5" x2="762.5" y2="578.5" stroke="#00ff00"/>
<line x1="760.5" y1="575.5" x2="764.5" y2="575.5" stroke="#00ff00"/>
<line x1="759.5" y1="578.5" x2="761.5" y2="576.5" stroke="#00ff00"/>
<line x1="763.5" y1="576.5" x2="765.5" y2="578.5" stroke="#00ff00"/>
<line x1="766.5" y1="573.5" x2="772.5" y2="573.5" stroke="#00ff00"/>
<line x1="769.5" y1="572.5" x2="769.5" y2="578.5" stroke="#00ff00"/>
<line x1="767.5" y1="575.5" x2="771.5" y2="575.5" stroke="#00ff00"/>
<line x1="766.5" y1="578.5" x2="768.5" y2="576.5" stroke="#00ff00"/>
<line x1="770.5" y1="576.5" x2="772.5" y2="578.5" stroke="#00ff00"/>
<line x1="766.5" y1="574.5" x2="766.5" y2="578.5" stroke="#00ff00"/>
<line x1="773.5" y1="573.5" x2="779.5" y2="573.5" stroke="#00ff00"/>
<line x1="776.5" y1="572.5" x2="776.5" y2="578.5" stroke="#00ff00"/>
<line x1="774.5" y1="575.5" x2="778.5" y2="575.5" stroke="#00ff00"/>
<line x1="773.5" y1="578.5" x2="775.5" y2="576.5" stroke="#00ff00"/>
<line x1="777.5" y1="576.5" x2="779.5" y2="578.5" stroke="#00ff00"/>
<rect x="791" y="570" width="3" height="4" fill="#00ff00" stroke="none"/>
<rect x="794" y="572" width="3" height="2" fill="#00ff00" stroke="none"/>
<rect x="797" y="570" width="2" height="4" fill="#00ff00" stroke="none"/>
<rect x="799" y="572" width="3" height="2" fill="#00ff00" stroke="none"/>
<rect x="802" y="570" width="4" height="4" fill="#00ff00" stroke="none"/>
<rect x="794" y="575" width="7" height="4" fill="#00ff00" stroke="none"/>
<line x1="807.5" y1="574.5" x2="825.5" y2="574.5" stroke="#00ff00"/>
<rect x="809" y="570" width="3" height="4" fill="#00ff00" stroke="none"/>
<rect x="812" y="572" width="2" height="2" fill="#00ff00" stroke="none"/>
<rect x="814" y="570" width="3" height="4" fill="#00ff00" stroke="none"/>
<rect x="817" y="572" width="2" height="2" fill="#00ff00" stroke="none"/>
<rect x="819" y="570" width="4" height="4" fill="#00ff00" stroke="none"/>
<rect x="826" y="569" width="7" height="10" fill="#00ff00" stroke="none"/>
<line x1="838.5" y1="569.5" x2="838.5" y2="573.5" stroke="#00ff00"/>
<line x1="841.5" y1="569.5" x2="841.5" y2="573.5" stroke="#00ff00"/>
<line x1="844.5" y1="569.5" x2="844.5" y2="573.5" stroke="#00ff00"/>
<rect x="837" y="575" width="3" height="4" fill="#00ff00" stroke="none"/>
<rect x="840" y="575" width="3" height="2" fill="#00ff00" stroke="none"/>
<rect x="843" y="575" width="3" height="4" fill="#00ff00" stroke="none"/>
<rect x="748" y="582" width="7" height="3" fill="#00ff00" stroke="none"/>
<rect x="762" y="582" width="7" height="3" fill="#00ff00" stroke="none"/>
<rect x="777" y="581" width="3" height="4" fill="#00ff00" stroke="none"/>
<rect x="781" y="582" width="2" height="3" fill="#00ff00" stroke="none"/>
<rect x="784" y="581" width="4" height="4" fill="#00ff00" stroke="none"/>
<rect x="788" y="582" width="3" height="2" fill="#00ff00" stroke="none"/>
<rect x="748" y="587" width="7" height="4" fill="#00ff00" stroke="none"/>
<rect x="798" y="584" width="36" height="5" fill="#00ff00" stroke="none"/>
<line x1="620.5" y1="500.5" x2="623.5" y2="500.5" stroke="#00ff00"/>
<line x1="621.5" y1="498.5" x2="621.5" y2="504.5" stroke="#00ff00"/>
<line x1="620.5" y1="502.5" x2="622.5" y2="501.5" stroke="#00ff00"/>
<line x1="621.5" y1="504.5" x2="620.5" y2="504.5" stroke="#00ff00"/>
<line x1="624.5" y1="500.5" x2="627.5" y2="500.5" stroke="#00ff00"/>
<line x1="625.5" y1="498.5" x2="625.5" y2="500.5" stroke="#00ff00"/>
<line x1="624.5" y1="502.5" x2="627.5" y2="502.5" stroke="#00ff00"/>
<line x1="624.5" y1="505.5" x2="627.5" y2="502.5" stroke="#00ff00"/>
<line x1="624.5" y1="503.5" x2="627.5" y2="505.5" stroke="#00ff00"/>
<line x1="628.5" y1="500.5" x2="634.5" y2="500.5" stroke="#00ff00"/>
<line x1="631.5" y1="498.5" x2="631.5" y2="505.5" stroke="#00ff00"/>
<line x1="630.5" y1="501.5" x2="628.5" y2="504.5" stroke="#00ff00"/>
<line x1="632.5" y1="501.5" x2="634.5" y2="504.5" stroke="#00ff00"/>
<line x1="633.5" y1="498.5" x2="633.5" y2="498.5" stroke="#00ff00"/>
<line x1="635.5" y1="498.5" x2="641.5" y2="498.5" stroke="#00ff00"/>
<rect x="636.5" y="499.5" width="4" height="2" stroke="#00ff00" fill="none"/>
<line x1="638.5" y1="498.5" x2="638.5" y2="501.5" stroke="#00ff00"/>
<line x1="635.5" y1="503.5" x2="641.5" y2="503.5" stroke="#00ff00"/>
<line x1="637.5" y1="502.5" x2="636.5" y2="504.5" stroke="#00ff00"/>
<line x1="636.5" y1="504.5" x2="640.5" y2="505.5" stroke="#00ff00"/>
<line x1="640.5" y1="503.5" x2="637.5" y2="505.5" stroke="#00ff00"/>
<line x1="642.5" y1="500.5" x2="648.5" y2="500.5" stroke="#00ff00"/>
<line x1="645.5" y1="498.5" x2="645.5" y2="505.5" stroke="#00ff00"/>
<line x1="643.5" y1="501.5" x2="644.5" y2="503.5" stroke="#00ff00"/>
<line x1="643.5" y1="505.5" x2="645.5" y2="504.5" stroke="#00ff00"/>
<line x1="646.5" y1="501.5" x2="648.5" y2="502.5" stroke="#00ff00"/>
<line x1="646.5" y1="503.5" x2="648.5" y2="505.5" stroke="#00ff00"/>
<line x1="647.5" y1="498.5" x2="647.5" y2="499.5" stroke="#00ff00"/>
<text x="564" y="519.5" fill="#00ff00" font-size="5.5" font-weight="bold">1.</text>
<rect x="569" y="515" width="142" height="5" fill="#00ff00" stroke="none"/>
<rect x="564" y="522" width="66" height="5" fill="#00ff00" stroke="none"/>
<rect x="630" y="525" width="2" height="1.5" fill="#00ff00" stroke="none"/>
<text x="564" y="532.5" fill="#00ff00" font-size="5.5" font-weight="bold">2.</text>
<rect x="569" y="528" width="124" height="5" fill="#00ff00" stroke="none"/>
<text x="564" y="539.5" fill="#00ff00" font-size="5.5" font-weight="bold">3.</text>
<rect x="569" y="534" width="36" height="5" fill="#00ff00" stroke="none"/>
<text x="604" y="539.5" fill="#00ff00" font-size="5.5" font-weight="bold">m3.</text>
<line x1="0.5" y1="580.5" x2="22.5" y2="580.5" stroke="#ffffff"/>
<polyline points="22.5,575.5 24.5,575.5 24.5,576.5 36.5,580.5 24.5,585.5 24.5,586.5 22.5,586.5 22.5,575.5" stroke="#ffffff" fill="none"/>
<line x1="24.5" y1="578.5" x2="32.5" y2="580.5" stroke="#909090"/>
<line x1="24.5" y1="582.5" x2="32.5" y2="580.5" stroke="#909090"/>
<line x1="24.5" y1="580.5" x2="38.5" y2="580.5" stroke="#909090"/>
<line x1="49.5" y1="574.5" x2="59.5" y2="588.5" stroke="#ffffff"/>
<line x1="58.5" y1="574.5" x2="48.5" y2="588.5" stroke="#ffffff"/>
<rect x="0" y="600" width="858" height="5" fill="#ececec" stroke="none"/>
<rect x="0" y="600" width="25" height="5" fill="#d8d8d8" stroke="none"/>
<line x1="3.5" y1="600.5" x2="3.5" y2="605.5" stroke="#a0a0a0"/>
<line x1="14.5" y1="600.5" x2="14.5" y2="605.5" stroke="#a0a0a0"/>
<line x1="25.5" y1="600.5" x2="25.5" y2="605.5" stroke="#808080"/>
<line x1="26.5" y1="600.5" x2="26.5" y2="605.5" stroke="#ffffff"/>
<line x1="62.5" y1="600.5" x2="62.5" y2="605.5" stroke="#808080"/>
<line x1="115.5" y1="600.5" x2="115.5" y2="605.5" stroke="#808080"/>
<line x1="172.5" y1="600.5" x2="172.5" y2="605.5" stroke="#808080"/>
<rect x="27" y="600" width="35" height="5" fill="#ffffff" stroke="none"/>
<line x1="33.5" y1="601.5" x2="41.5" y2="601.5" stroke="#000"/>
<line x1="37.5" y1="600.5" x2="37.5" y2="605.5" stroke="#000"/>
<line x1="43.5" y1="601.5" x2="52.5" y2="601.5" stroke="#000"/>
<line x1="45.5" y1="603.5" x2="50.5" y2="603.5" stroke="#000"/>
<line x1="34.5" y1="603.5" x2="40.5" y2="603.5" stroke="#000"/>
<text x="68" y="609" fill="#000" font-size="10" >Layout1</text>
<text x="121" y="609" fill="#000" font-size="10" >Layout2</text>
<rect x="137" y="0" width="6" height="4" fill="#3060a0" stroke="none"/>
<rect x="145" y="0" width="6" height="4" fill="#4a80c0" stroke="none"/>
<rect x="160.5" y="0.5" width="12" height="3" stroke="#404040" fill="none"/>
<line x1="186.5" y1="0.5" x2="186.5" y2="7.5" stroke="#909090"/>
<line x1="190.5" y1="0.5" x2="190.5" y2="7.5" stroke="#909090"/>
<rect x="205" y="0" width="6" height="3" fill="#5070a0" stroke="none"/>
<rect x="232" y="0" width="2" height="2" fill="#203060" stroke="none"/>
<rect x="243" y="0" width="13" height="2" fill="#e0c030" stroke="none"/>
<rect x="247" y="0" width="6" height="2" fill="#2060d0" stroke="none"/>
<rect x="264" y="0" width="9" height="1" fill="#7090b8" stroke="none"/>
<rect x="283" y="0" width="5" height="2" fill="#a0a040" stroke="none"/>
<rect x="326" y="0" width="2" height="2" fill="#000000" stroke="none"/>
<line x1="222.5" y1="5.5" x2="521.5" y2="5.5" stroke="#d8d8d8"/>
<line x1="222.5" y1="0.5" x2="222.5" y2="5.5" stroke="#d8d8d8"/>
<rect x="525" y="0" width="4" height="3" fill="#203080" stroke="none"/>
<rect x="534" y="0" width="3" height="2" fill="#a08020" stroke="none"/>
<rect x="556" y="0" width="5" height="2" fill="#6070a0" stroke="none"/>
</svg>
</body></html>
